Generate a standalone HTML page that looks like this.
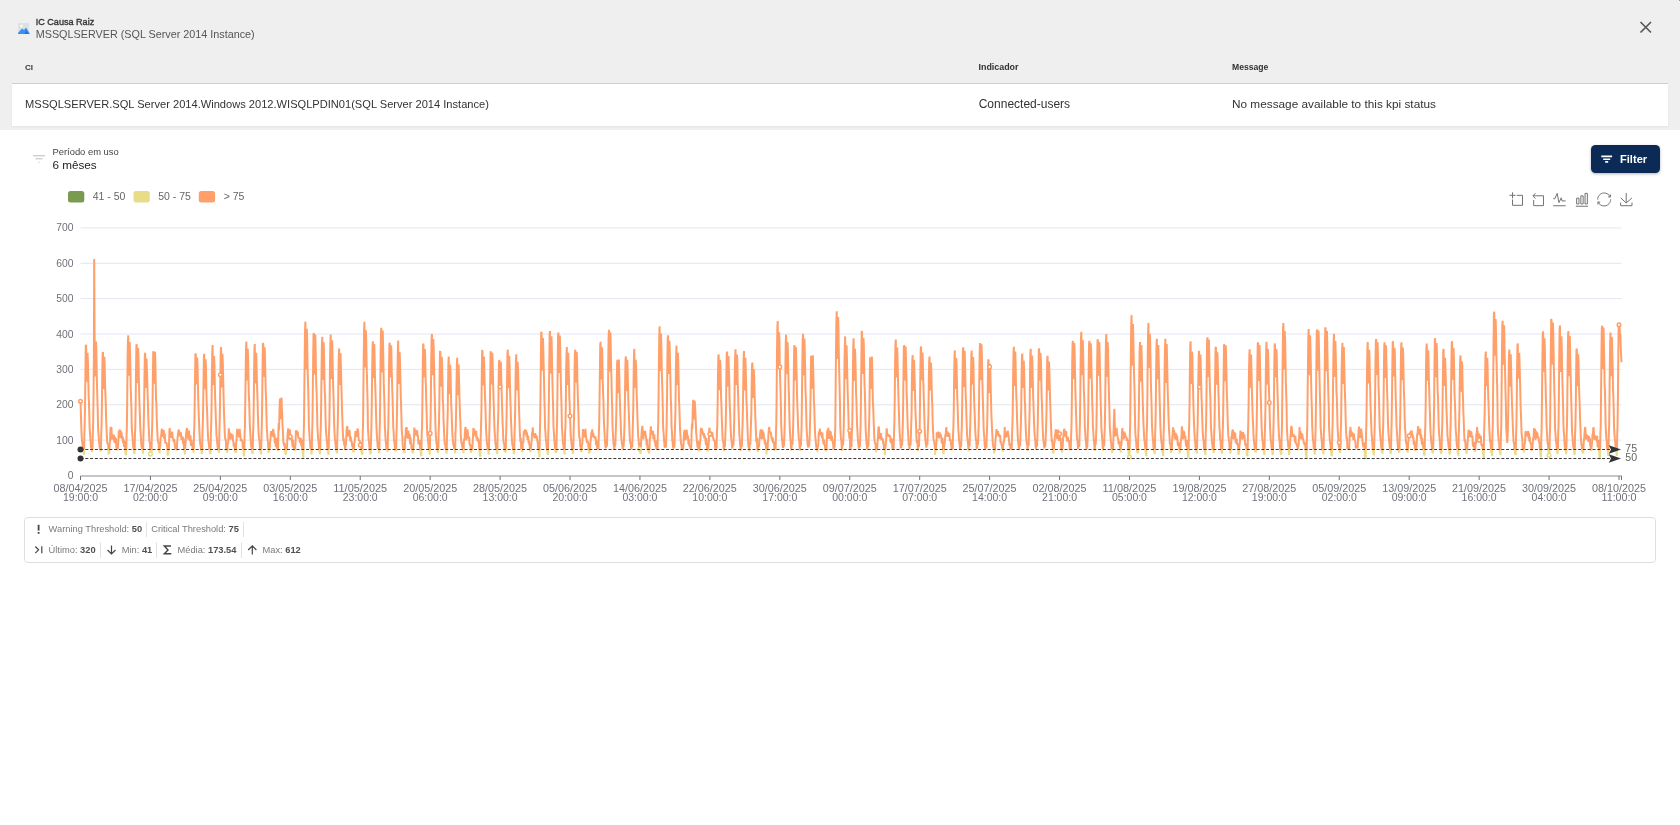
<!DOCTYPE html>
<html><head><meta charset="utf-8">
<style>
html,body{margin:0;padding:0;width:1680px;height:825px;overflow:hidden;background:#fff;font-family:"Liberation Sans",sans-serif;}
.abs{position:absolute;}
#hdr{left:0;top:0;width:1680px;height:130px;background:#efefef;}
#row{left:12px;top:83px;width:1656px;height:43px;background:#fff;border-top:1px solid #cfcfcf;box-sizing:border-box;box-shadow:0 1px 2px rgba(0,0,0,0.05);}
#btn{left:1590.8px;top:144.7px;width:69px;height:28.7px;background:#0b2a55;border-radius:4.5px;box-shadow:0 1px 3px rgba(0,0,0,0.3);}
#stats{left:23.8px;top:517.2px;width:1632.4px;height:45.4px;border:1px solid #dedede;border-radius:4px;box-sizing:border-box;}
svg{position:absolute;left:0;top:0;will-change:transform;}
text{font-family:"Liberation Sans",sans-serif;}
</style></head>
<body>
<div id="hdr" class="abs"></div>
<div id="row" class="abs"></div>
<div id="btn" class="abs"></div>
<div id="stats" class="abs"></div>
<svg width="1680" height="825" viewBox="0 0 1680 825">
<!-- header -->
<g>
  <rect x="18" y="23" width="11" height="11" fill="#dde1e6"/>
  <circle cx="21.5" cy="26" r="1.2" fill="#fff"/>
  <path d="M18,33 L22,28.5 L24,30 L26,27.5 L30,34 L18,34 Z" fill="#3c8ff0"/>
  <path d="M26.5,30 L28.5,34 L24.5,34 Z" fill="#1a73e8"/>
</g>
<text x="35.7" y="24.6" font-size="9.6" fill="#333" stroke="#333" stroke-width="0.35" textLength="58.5" lengthAdjust="spacingAndGlyphs">IC Causa Raiz</text>
<text x="35.7" y="37.9" font-size="10.8" fill="#555">MSSQLSERVER (SQL Server 2014 Instance)</text>
<path d="M1640.5,22 L1651,32.5 M1651,22 L1640.5,32.5" stroke="#555" stroke-width="1.6" fill="none"/>
<text x="25" y="70" font-size="8" font-weight="700" fill="#333">CI</text>
<text x="978.5" y="70" font-size="8.9" font-weight="700" fill="#333">Indicador</text>
<text x="1232" y="70" font-size="8.6" font-weight="700" fill="#333">Message</text>
<text x="25" y="108.4" font-size="11.1" fill="#333">MSSQLSERVER.SQL Server 2014.Windows 2012.WISQLPDIN01(SQL Server 2014 Instance)</text>
<text x="978.7" y="108.4" font-size="12" fill="#333">Connected-users</text>
<text x="1232" y="108.4" font-size="11.8" fill="#333">No message available to this kpi status</text>
<!-- filter area -->
<path d="M33,155.8 H45 M35.5,158.8 H42.5 M38.5,162.3 H39.5" stroke="#bbb" stroke-width="1" fill="none"/>
<text x="52.5" y="155.4" font-size="9.4" fill="#444">Período em uso</text>
<text x="52.5" y="168.9" font-size="11.7" fill="#222">6 mêses</text>
<path d="M1601.3,156.4 H1612.1 M1603.2,159.2 H1610.2 M1605.2,161.9 H1608.2" stroke="#fff" stroke-width="1.6" fill="none"/>
<text x="1620" y="162.9" font-size="11.1" font-weight="700" fill="#fff">Filter</text>
<!-- legend -->
<rect x="68" y="191" width="16.3" height="11.5" rx="2.5" fill="#7a9a50"/>
<rect x="133.5" y="191" width="16.3" height="11.5" rx="2.5" fill="#e8dc88"/>
<rect x="198.8" y="191" width="16.3" height="11.5" rx="2.5" fill="#ffa06a"/>
<text x="92.7" y="199.6" font-size="10.5" fill="#666">41 - 50</text>
<text x="158.2" y="199.6" font-size="10.5" fill="#666">50 - 75</text>
<text x="223.7" y="199.6" font-size="10.5" fill="#666">&gt; 75</text>
<!-- toolbox -->
<g fill="none" stroke="#727272" stroke-width="1">
 <g transform="translate(1509.5,192.3) scale(0.2241)"><path vector-effect="non-scaling-stroke" d="M0,13.5h26.9 M13.5,26.9V0 M32.1,13.5H58V58H13.5 V32.1"/></g>
 <g transform="translate(1530.7,192.9) scale(0.22)"><path vector-effect="non-scaling-stroke" d="M22,1.4L9.9,13.5l12.3,12.3 M10.3,13.1H58V58H13.5V32.1"/></g>
 <g transform="translate(1552.2,191.7) scale(0.2423)"><path vector-effect="non-scaling-stroke" d="M4.1,28.9h7.1l9.3-22l7.4,38l9.7-19.7l3,12.8h14.9M4.1,58h51.4"/></g>
 <g transform="translate(1575.1,192.9) scale(0.2300)"><path vector-effect="non-scaling-stroke" d="M6.7,22.9h10V48h-10V22.9zM24.9,13h10v35h-10V13zM43.2,2h10v46h-10V2zM3.1,58h53.7"/></g>
 <g transform="translate(1597.2,192.5) scale(0.2330)"><path vector-effect="non-scaling-stroke" d="M3.8,33.4 M47,18.9h9.8V8.7 M56.3,20.1 C52.1,9,40.5,0.6,26.8,2.1C12.6,3.7,1.6,16.2,2.1,30.6 M13,41.1H3.1v10.2 M3.7,39.8c3.9,11,15.5,19.4,29.2,17.9 c14.2-1.6,25.2-14.1,24.7-28.5"/></g>
 <g transform="translate(1619.6,192.7) scale(0.2260)"><path vector-effect="non-scaling-stroke" d="M4.7,22.9L29.3,45.5L54.7,23.4M4.6,43.6v14h50.2V43.6M29.3,45.5V1"/></g>
</g>
<line x1="80.5" y1="440.13" x2="1621.5" y2="440.13" stroke="#E0E6F1" stroke-width="1"/>
<line x1="80.5" y1="404.76" x2="1621.5" y2="404.76" stroke="#E0E6F1" stroke-width="1"/>
<line x1="80.5" y1="369.39" x2="1621.5" y2="369.39" stroke="#E0E6F1" stroke-width="1"/>
<line x1="80.5" y1="334.02" x2="1621.5" y2="334.02" stroke="#E0E6F1" stroke-width="1"/>
<line x1="80.5" y1="298.65" x2="1621.5" y2="298.65" stroke="#E0E6F1" stroke-width="1"/>
<line x1="80.5" y1="263.28" x2="1621.5" y2="263.28" stroke="#E0E6F1" stroke-width="1"/>
<line x1="80.5" y1="227.91" x2="1621.5" y2="227.91" stroke="#E0E6F1" stroke-width="1"/>
<text x="73.50" y="479.00" font-size="10.3" fill="#6E7079" text-anchor="end" font-weight="400" >0</text>
<text x="73.50" y="443.63" font-size="10.3" fill="#6E7079" text-anchor="end" font-weight="400" >100</text>
<text x="73.50" y="408.26" font-size="10.3" fill="#6E7079" text-anchor="end" font-weight="400" >200</text>
<text x="73.50" y="372.89" font-size="10.3" fill="#6E7079" text-anchor="end" font-weight="400" >300</text>
<text x="73.50" y="337.52" font-size="10.3" fill="#6E7079" text-anchor="end" font-weight="400" >400</text>
<text x="73.50" y="302.15" font-size="10.3" fill="#6E7079" text-anchor="end" font-weight="400" >500</text>
<text x="73.50" y="266.78" font-size="10.3" fill="#6E7079" text-anchor="end" font-weight="400" >600</text>
<text x="73.50" y="231.41" font-size="10.3" fill="#6E7079" text-anchor="end" font-weight="400" >700</text>
<defs><linearGradient id="lg" gradientUnits="userSpaceOnUse" x1="0" y1="475.50" x2="0" y2="227.91"><stop offset="0" stop-color="#91cc75"/></linearGradient></defs>
<defs><linearGradient id="vm" gradientUnits="userSpaceOnUse" x1="0" y1="475.50" x2="0" y2="227.91">
<stop offset="0.07143" stop-color="#7a9a50"/><stop offset="0.07143" stop-color="#e8dc88"/>
<stop offset="0.10714" stop-color="#e8dc88"/><stop offset="0.10714" stop-color="#ffa06a"/>
<stop offset="1" stop-color="#ffa06a"/></linearGradient></defs>
<polyline points="80.50,401.22 80.85,412.54 81.20,424.21 81.55,433.76 81.91,439.42 82.26,442.49 82.61,445.79 82.96,450.01 83.31,449.81 83.66,451.84 84.01,454.73 84.37,436.90 84.72,423.08 85.07,405.42 85.42,372.97 85.77,345.39 86.12,345.20 86.47,379.15 86.83,381.70 87.18,354.44 87.53,352.68 87.88,359.69 88.23,375.01 88.58,393.11 88.93,402.01 89.29,414.86 89.64,428.23 89.99,432.82 90.34,438.63 90.69,442.25 91.04,447.79 91.39,448.08 91.75,450.32 92.10,451.48 92.45,451.57 92.80,434.17 93.15,422.75 93.50,398.43 93.85,360.19 94.21,259.04 94.56,330.94 94.91,370.95 95.26,376.48 95.61,347.91 95.96,341.68 96.31,347.70 96.67,369.84 97.02,385.47 97.37,399.09 97.72,410.39 98.07,427.09 98.42,433.58 98.77,437.71 99.13,443.20 99.48,444.39 99.83,448.80 100.18,448.54 100.53,450.95 100.88,451.13 101.23,434.33 101.58,425.70 101.94,405.25 102.29,373.74 102.64,353.24 102.99,351.92 103.34,385.36 103.69,388.92 104.04,359.91 104.40,356.82 104.75,368.70 105.10,386.27 105.45,395.45 105.80,404.34 106.15,420.34 106.50,427.66 106.86,436.43 107.21,442.27 107.56,443.79 107.91,443.32 108.26,445.19 108.61,454.58 108.96,450.04 109.32,453.51 109.67,443.43 110.02,441.68 110.37,431.32 110.72,426.87 111.07,430.18 111.42,427.06 111.78,435.51 112.13,439.78 112.48,434.26 112.83,438.07 113.18,435.84 113.53,435.32 113.88,434.87 114.24,440.46 114.59,442.92 114.94,436.75 115.29,443.26 115.64,438.74 115.99,438.25 116.34,446.91 116.70,448.98 117.05,450.20 117.40,449.77 117.75,448.45 118.10,444.89 118.45,439.03 118.80,430.77 119.16,431.22 119.51,430.86 119.86,429.62 120.21,436.18 120.56,437.71 120.91,430.78 121.26,433.57 121.62,432.61 121.97,438.96 122.32,436.67 122.67,436.57 123.02,443.13 123.37,439.07 123.72,440.33 124.08,447.01 124.43,441.09 124.78,446.10 125.13,448.81 125.48,453.61 125.83,454.36 126.18,454.94 126.54,436.86 126.89,426.10 127.24,397.02 127.59,359.89 127.94,341.05 128.29,335.39 128.64,373.74 129.00,375.67 129.35,347.28 129.70,342.02 130.05,352.86 130.40,369.51 130.75,388.45 131.10,399.14 131.46,409.94 131.81,428.36 132.16,432.81 132.51,437.18 132.86,442.22 133.21,447.05 133.56,448.32 133.92,451.23 134.27,453.55 134.62,453.29 134.97,434.23 135.32,425.94 135.67,404.39 136.02,371.41 136.38,345.51 136.73,344.36 137.08,378.25 137.43,383.10 137.78,355.60 138.13,348.12 138.48,356.99 138.84,377.16 139.19,394.55 139.54,405.81 139.89,414.87 140.24,427.78 140.59,432.31 140.94,437.46 141.29,444.52 141.65,446.83 142.00,448.31 142.35,449.66 142.70,451.14 143.05,453.64 143.40,436.44 143.75,425.20 144.11,405.53 144.46,378.37 144.81,356.85 145.16,352.65 145.51,387.19 145.86,387.26 146.21,358.96 146.57,359.43 146.92,370.38 147.27,379.78 147.62,395.04 147.97,404.16 148.32,418.95 148.67,427.00 149.03,434.49 149.38,441.92 149.73,441.89 150.08,444.66 150.43,453.92 150.78,450.14 151.13,453.15 151.49,453.66 151.84,436.06 152.19,426.07 152.54,405.62 152.89,376.27 153.24,351.17 153.59,352.80 153.95,381.98 154.30,383.47 154.65,356.66 155.00,351.81 155.35,361.87 155.70,380.52 156.05,399.62 156.41,404.51 156.76,418.74 157.11,428.36 157.46,434.63 157.81,440.15 158.16,442.69 158.51,441.75 158.87,447.59 159.22,451.85 159.57,453.37 159.92,446.00 160.27,445.65 160.62,437.53 160.97,436.19 161.33,434.07 161.68,429.91 162.03,428.73 162.38,436.79 162.73,433.20 163.08,431.30 163.43,430.95 163.79,430.08 164.14,439.00 164.49,434.70 164.84,433.97 165.19,442.85 165.54,442.23 165.89,443.67 166.25,442.71 166.60,442.61 166.95,446.04 167.30,446.08 167.65,454.97 168.00,455.19 168.35,452.76 168.71,448.89 169.06,444.10 169.41,430.46 169.76,428.03 170.11,434.03 170.46,431.62 170.81,435.46 171.17,437.59 171.52,436.55 171.87,432.41 172.22,432.26 172.57,435.75 172.92,438.73 173.27,438.88 173.63,442.18 173.98,439.62 174.33,439.56 174.68,444.06 175.03,445.76 175.38,448.75 175.73,449.78 176.09,449.43 176.44,448.50 176.79,450.43 177.14,442.67 177.49,439.00 177.84,435.45 178.19,432.46 178.55,430.26 178.90,429.78 179.25,434.49 179.60,434.10 179.95,435.54 180.30,436.11 180.65,432.73 181.01,432.68 181.36,439.83 181.71,437.99 182.06,439.40 182.41,436.64 182.76,437.53 183.11,444.12 183.46,438.24 183.82,443.11 184.17,450.81 184.52,450.72 184.87,454.56 185.22,446.45 185.57,443.94 185.92,436.57 186.28,432.13 186.63,429.75 186.98,428.08 187.33,431.05 187.68,437.41 188.03,435.08 188.38,439.73 188.74,437.04 189.09,430.53 189.44,438.66 189.79,439.64 190.14,440.99 190.49,435.22 190.84,443.08 191.20,445.93 191.55,439.82 191.90,444.56 192.25,444.63 192.60,448.83 192.95,448.90 193.30,450.57 193.66,452.73 194.01,433.84 194.36,426.19 194.71,405.33 195.06,376.10 195.41,353.55 195.76,354.13 196.12,384.35 196.47,383.04 196.82,364.39 197.17,357.56 197.52,365.80 197.87,380.07 198.22,399.11 198.58,409.48 198.93,419.28 199.28,427.91 199.63,434.88 199.98,441.11 200.33,444.79 200.68,446.37 201.04,450.09 201.39,450.53 201.74,453.95 202.09,453.04 202.44,433.16 202.79,424.73 203.14,407.80 203.50,381.98 203.85,357.84 204.20,353.78 204.55,387.94 204.90,389.05 205.25,365.30 205.60,359.38 205.96,367.17 206.31,388.05 206.66,402.82 207.01,407.80 207.36,418.87 207.71,429.88 208.06,437.33 208.42,441.15 208.77,443.32 209.12,446.87 209.47,450.67 209.82,449.88 210.17,453.05 210.52,454.08 210.88,434.26 211.23,422.63 211.58,406.52 211.93,371.62 212.28,351.92 212.63,344.96 212.98,382.71 213.34,384.96 213.69,359.70 214.04,355.96 214.39,362.97 214.74,380.30 215.09,397.15 215.44,406.07 215.80,417.23 216.15,425.88 216.50,435.79 216.85,437.91 217.20,443.02 217.55,445.58 217.90,449.63 218.26,448.91 218.61,451.08 218.96,452.82 219.31,435.07 219.66,423.53 220.01,404.11 220.36,374.70 220.72,352.39 221.07,347.03 221.42,385.58 221.77,387.26 222.12,362.18 222.47,353.76 222.82,364.07 223.17,378.35 223.53,394.11 223.88,408.46 224.23,419.00 224.58,428.77 224.93,436.54 225.28,439.72 225.63,438.60 225.99,442.11 226.34,450.87 226.69,447.03 227.04,452.81 227.39,450.03 227.74,443.33 228.09,443.94 228.45,438.57 228.80,428.22 229.15,432.14 229.50,432.96 229.85,433.02 230.20,434.27 230.55,439.71 230.91,435.28 231.26,433.64 231.61,434.60 231.96,438.55 232.31,436.52 232.66,434.53 233.01,441.13 233.37,441.14 233.72,446.46 234.07,443.97 234.42,444.27 234.77,452.18 235.12,446.83 235.47,447.34 235.83,453.03 236.18,441.38 236.53,441.29 236.88,432.32 237.23,428.92 237.58,432.11 237.93,430.02 238.29,432.35 238.64,433.07 238.99,437.33 239.34,431.43 239.69,428.81 240.04,432.88 240.39,435.55 240.75,440.86 241.10,438.77 241.45,441.49 241.80,439.54 242.15,441.32 242.50,441.31 242.85,447.20 243.21,448.94 243.56,452.53 243.91,456.41 244.26,454.35 244.61,434.40 244.96,425.86 245.31,399.69 245.67,372.21 246.02,348.38 246.37,341.66 246.72,379.57 247.07,379.87 247.42,352.76 247.77,348.81 248.13,360.42 248.48,378.58 248.83,395.21 249.18,401.22 249.53,413.75 249.88,426.54 250.23,432.32 250.59,438.96 250.94,442.67 251.29,446.42 251.64,448.05 251.99,451.99 252.34,452.31 252.69,454.02 253.05,433.96 253.40,424.96 253.75,405.48 254.10,372.62 254.45,349.64 254.80,344.12 255.15,383.33 255.51,379.84 255.86,359.15 256.21,352.85 256.56,364.41 256.91,381.15 257.26,391.97 257.61,402.69 257.97,417.07 258.32,427.79 258.67,434.37 259.02,438.39 259.37,440.43 259.72,445.00 260.07,449.15 260.43,451.59 260.78,452.73 261.13,454.23 261.48,434.89 261.83,424.12 262.18,403.68 262.53,369.74 262.88,343.13 263.24,344.42 263.59,376.58 263.94,375.96 264.29,348.67 264.64,347.30 264.99,356.85 265.34,374.11 265.70,389.88 266.05,398.20 266.40,413.01 266.75,427.40 267.10,431.78 267.45,438.06 267.80,440.97 268.16,443.70 268.51,453.20 268.86,447.90 269.21,449.61 269.56,449.40 269.91,445.22 270.26,440.49 270.62,437.64 270.97,431.02 271.32,434.48 271.67,431.64 272.02,432.42 272.37,436.40 272.72,434.57 273.08,429.54 273.43,429.45 273.78,437.82 274.13,433.20 274.48,436.17 274.83,442.85 275.18,441.42 275.54,444.00 275.89,446.84 276.24,437.95 276.59,442.38 276.94,448.75 277.29,447.40 277.64,449.11 278.00,450.69 278.35,433.81 278.70,422.98 279.05,430.11 279.40,414.88 279.75,401.63 280.10,398.67 280.46,417.05 280.81,419.01 281.16,403.99 281.51,397.62 281.86,408.04 282.21,414.52 282.56,426.50 282.92,431.24 283.27,440.81 283.62,443.41 283.97,444.35 284.32,445.99 284.67,442.78 285.02,448.84 285.38,452.96 285.73,453.97 286.08,454.15 286.43,449.42 286.78,449.48 287.13,444.52 287.48,435.30 287.84,432.14 288.19,428.36 288.54,435.77 288.89,434.65 289.24,436.84 289.59,439.53 289.94,429.48 290.30,436.59 290.65,438.20 291.00,436.12 291.35,440.38 291.70,437.59 292.05,441.54 292.40,445.00 292.76,447.08 293.11,439.80 293.46,447.86 293.81,445.97 294.16,450.71 294.51,447.11 294.86,451.16 295.22,447.73 295.57,442.28 295.92,431.93 296.27,430.10 296.62,431.65 296.97,435.38 297.32,432.09 297.68,431.57 298.03,434.33 298.38,438.33 298.73,437.38 299.08,438.24 299.43,438.92 299.78,441.56 300.14,442.82 300.49,438.71 300.84,437.86 301.19,445.71 301.54,439.87 301.89,446.06 302.24,448.32 302.60,451.42 302.95,453.45 303.30,457.68 303.65,435.76 304.00,423.97 304.35,389.08 304.70,357.31 305.05,330.12 305.41,321.64 305.76,369.23 306.11,367.28 306.46,337.40 306.81,328.90 307.16,339.25 307.51,364.26 307.87,378.43 308.22,390.58 308.57,404.68 308.92,426.50 309.27,431.56 309.62,438.49 309.97,441.85 310.33,447.02 310.68,448.42 311.03,450.29 311.38,453.23 311.73,454.32 312.08,434.14 312.43,423.98 312.79,394.25 313.14,360.29 313.49,334.92 313.84,332.93 314.19,369.60 314.54,374.46 314.89,342.32 315.25,334.46 315.60,346.63 315.95,369.59 316.30,386.00 316.65,393.31 317.00,408.29 317.35,425.35 317.71,431.74 318.06,438.18 318.41,440.14 318.76,445.06 319.11,450.15 319.46,450.72 319.81,454.00 320.17,453.43 320.52,433.23 320.87,425.93 321.22,399.34 321.57,368.19 321.92,345.00 322.27,336.86 322.63,378.27 322.98,379.63 323.33,351.37 323.68,342.39 324.03,353.82 324.38,375.76 324.73,390.73 325.09,396.52 325.44,413.20 325.79,426.47 326.14,433.34 326.49,437.01 326.84,441.18 327.19,444.84 327.55,449.37 327.90,451.42 328.25,453.59 328.60,454.68 328.95,433.73 329.30,425.90 329.65,402.80 330.01,361.56 330.36,343.48 330.71,334.42 331.06,378.86 331.41,376.17 331.76,350.23 332.11,340.40 332.47,352.98 332.82,370.77 333.17,386.52 333.52,396.81 333.87,412.43 334.22,426.32 334.57,433.25 334.93,439.38 335.28,441.39 335.63,445.60 335.98,448.28 336.33,451.35 336.68,452.18 337.03,453.18 337.39,434.11 337.74,426.04 338.09,406.94 338.44,374.31 338.79,355.71 339.14,348.50 339.49,382.67 339.85,384.88 340.20,357.96 340.55,353.19 340.90,366.09 341.25,381.59 341.60,392.22 341.95,407.02 342.31,417.50 342.66,428.85 343.01,435.98 343.36,441.23 343.71,437.94 344.06,443.71 344.41,445.17 344.76,445.91 345.12,450.06 345.47,445.36 345.82,445.11 346.17,440.88 346.52,430.70 346.87,427.58 347.22,426.09 347.58,431.79 347.93,431.25 348.28,436.74 348.63,430.60 348.98,429.90 349.33,434.97 349.68,430.48 350.04,438.79 350.39,441.02 350.74,436.67 351.09,442.02 351.44,441.37 351.79,441.68 352.14,446.12 352.50,443.53 352.85,450.68 353.20,451.01 353.55,452.52 353.90,447.10 354.25,443.17 354.60,442.09 354.96,438.47 355.31,433.13 355.66,431.04 356.01,435.53 356.36,436.95 356.71,433.47 357.06,433.34 357.42,429.38 357.77,428.65 358.12,431.01 358.47,437.06 358.82,440.41 359.17,440.44 359.52,440.47 359.88,441.31 360.23,445.08 360.58,442.04 360.93,444.59 361.28,450.34 361.63,453.18 361.98,453.66 362.34,454.67 362.69,435.79 363.04,425.39 363.39,388.90 363.74,356.16 364.09,329.21 364.44,321.78 364.80,364.72 365.15,367.34 365.50,337.46 365.85,330.23 366.20,338.50 366.55,360.61 366.90,375.40 367.26,389.05 367.61,403.19 367.96,428.33 368.31,434.17 368.66,439.73 369.01,441.78 369.36,446.60 369.72,451.25 370.07,450.03 370.42,453.91 370.77,453.77 371.12,435.98 371.47,423.21 371.82,401.96 372.18,369.39 372.53,348.01 372.88,341.24 373.23,377.57 373.58,377.23 373.93,348.60 374.28,343.95 374.64,358.70 374.99,377.01 375.34,388.77 375.69,399.33 376.04,413.48 376.39,425.52 376.74,432.87 377.10,438.79 377.45,442.72 377.80,447.85 378.15,448.95 378.50,448.67 378.85,450.75 379.20,453.17 379.56,434.36 379.91,422.72 380.26,392.16 380.61,356.78 380.96,333.04 381.31,327.88 381.66,371.63 382.02,371.55 382.37,338.51 382.72,330.43 383.07,345.37 383.42,365.53 383.77,383.63 384.12,394.70 384.47,406.58 384.83,426.86 385.18,431.43 385.53,439.23 385.88,442.20 386.23,445.88 386.58,449.85 386.93,448.84 387.29,451.06 387.64,451.36 387.99,434.56 388.34,426.22 388.69,401.05 389.04,367.62 389.39,345.21 389.75,342.65 390.10,377.25 390.45,375.82 390.80,354.66 391.15,345.28 391.50,358.13 391.85,374.59 392.21,388.03 392.56,398.32 392.91,413.17 393.26,427.77 393.61,431.57 393.96,439.14 394.31,441.96 394.67,444.69 395.02,450.22 395.37,451.10 395.72,450.58 396.07,451.31 396.42,435.71 396.77,424.81 397.13,404.68 397.48,372.85 397.83,349.64 398.18,340.53 398.53,383.74 398.88,382.68 399.23,356.57 399.59,352.16 399.94,359.53 400.29,375.10 400.64,390.21 400.99,402.21 401.34,413.85 401.69,428.44 402.05,434.17 402.40,437.03 402.75,445.86 403.10,447.93 403.45,448.78 403.80,452.52 404.15,450.67 404.51,453.49 404.86,447.86 405.21,435.92 405.56,438.10 405.91,427.56 406.26,433.19 406.61,427.11 406.97,432.16 407.32,434.53 407.67,438.47 408.02,437.86 408.37,430.67 408.72,437.45 409.07,438.74 409.43,434.33 409.78,435.27 410.13,444.28 410.48,437.31 410.83,442.64 411.18,442.98 411.53,449.40 411.89,449.63 412.24,445.90 412.59,453.11 412.94,452.72 413.29,448.70 413.64,443.56 413.99,436.18 414.35,427.47 414.70,434.12 415.05,434.47 415.40,429.72 415.75,431.32 416.10,430.76 416.45,436.10 416.81,434.40 417.16,430.32 417.51,436.02 417.86,435.43 418.21,440.43 418.56,444.53 418.91,442.97 419.27,440.68 419.62,440.55 419.97,445.70 420.32,449.64 420.67,452.89 421.02,455.39 421.37,455.74 421.73,433.71 422.08,425.56 422.43,401.49 422.78,365.76 423.13,343.69 423.48,344.42 423.83,376.21 424.19,377.09 424.54,355.17 424.89,349.14 425.24,360.26 425.59,378.65 425.94,388.11 426.29,402.80 426.64,412.84 427.00,428.05 427.35,434.78 427.70,436.86 428.05,440.50 428.40,444.05 428.75,448.78 429.10,450.11 429.46,451.30 429.81,454.63 430.16,433.41 430.51,424.62 430.86,400.19 431.21,361.61 431.56,339.52 431.92,333.97 432.27,374.53 432.62,374.92 432.97,346.34 433.32,338.96 433.67,347.60 434.02,366.30 434.38,383.81 434.73,395.31 435.08,411.17 435.43,425.00 435.78,433.87 436.13,439.34 436.48,443.22 436.84,445.06 437.19,450.12 437.54,449.65 437.89,453.18 438.24,451.22 438.59,435.18 438.94,424.48 439.30,407.00 439.65,373.53 440.00,351.63 440.35,351.15 440.70,386.53 441.05,385.28 441.40,364.33 441.76,356.84 442.11,363.79 442.46,380.43 442.81,400.40 443.16,404.71 443.51,418.80 443.86,426.62 444.22,436.24 444.57,441.75 444.92,445.07 445.27,444.47 445.62,449.77 445.97,448.78 446.32,451.51 446.68,453.58 447.03,435.78 447.38,424.37 447.73,412.21 448.08,383.31 448.43,361.55 448.78,356.48 449.14,391.12 449.49,394.22 449.84,370.42 450.19,364.70 450.54,372.29 450.89,390.77 451.24,405.15 451.60,412.77 451.95,422.74 452.30,432.94 452.65,438.13 453.00,441.43 453.35,445.49 453.70,445.04 454.06,448.23 454.41,448.90 454.76,450.73 455.11,453.27 455.46,434.29 455.81,425.87 456.16,409.59 456.52,384.40 456.87,364.17 457.22,357.79 457.57,394.24 457.92,394.93 458.27,367.45 458.62,364.45 458.98,377.28 459.33,392.62 459.68,404.13 460.03,415.76 460.38,421.45 460.73,432.94 461.08,439.51 461.44,443.71 461.79,441.79 462.14,446.41 462.49,447.44 462.84,448.92 463.19,451.68 463.54,453.03 463.90,441.03 464.25,438.37 464.60,438.65 464.95,431.82 465.30,427.89 465.65,427.12 466.00,437.75 466.35,440.40 466.71,435.36 467.06,434.48 467.41,429.43 467.76,431.47 468.11,437.43 468.46,438.05 468.81,437.95 469.17,436.60 469.52,444.29 469.87,443.95 470.22,445.68 470.57,444.49 470.92,452.97 471.27,446.39 471.63,450.88 471.98,448.65 472.33,449.25 472.68,442.59 473.03,435.11 473.38,428.00 473.73,429.87 474.09,433.62 474.44,429.33 474.79,434.40 475.14,434.92 475.49,436.50 475.84,434.91 476.19,430.79 476.55,439.26 476.90,437.01 477.25,437.61 477.60,441.46 477.95,439.07 478.30,439.19 478.65,441.40 479.01,445.04 479.36,450.66 479.71,454.75 480.06,455.42 480.41,456.60 480.76,436.19 481.11,422.95 481.47,408.06 481.82,372.20 482.17,349.92 482.52,351.92 482.87,381.66 483.22,385.31 483.57,361.37 483.93,356.50 484.28,367.65 484.63,380.81 484.98,396.77 485.33,403.56 485.68,416.24 486.03,429.08 486.39,435.44 486.74,440.54 487.09,443.90 487.44,446.94 487.79,450.42 488.14,449.46 488.49,452.95 488.85,454.55 489.20,436.09 489.55,424.62 489.90,405.79 490.25,376.57 490.60,351.95 490.95,351.60 491.31,383.63 491.66,384.07 492.01,361.95 492.36,352.84 492.71,365.44 493.06,380.78 493.41,395.48 493.77,405.34 494.12,417.78 494.47,429.22 494.82,434.19 495.17,438.97 495.52,444.91 495.87,445.66 496.23,450.40 496.58,448.66 496.93,451.61 497.28,454.12 497.63,433.77 497.98,422.50 498.33,411.81 498.69,377.77 499.04,361.37 499.39,359.99 499.74,389.16 500.09,386.72 500.44,365.50 500.79,361.84 501.15,374.63 501.50,386.96 501.85,398.82 502.20,410.88 502.55,421.18 502.90,429.46 503.25,438.00 503.61,442.55 503.96,443.11 504.31,444.71 504.66,450.66 505.01,451.79 505.36,451.32 505.71,452.84 506.06,435.77 506.42,422.86 506.77,404.89 507.12,376.45 507.47,352.31 507.82,349.68 508.17,384.87 508.52,388.10 508.88,365.39 509.23,355.73 509.58,365.21 509.93,383.98 510.28,397.88 510.63,407.13 510.98,419.60 511.34,427.89 511.69,435.78 512.04,441.34 512.39,445.34 512.74,445.76 513.09,450.20 513.44,449.34 513.80,453.61 514.15,453.45 514.50,436.18 514.85,424.75 515.20,408.23 515.55,381.23 515.90,360.97 516.26,354.31 516.61,390.26 516.96,388.11 517.31,366.24 517.66,361.86 518.01,368.47 518.36,381.52 518.72,396.46 519.07,408.66 519.42,420.06 519.77,430.93 520.12,437.47 520.47,442.19 520.82,437.84 521.18,449.31 521.53,444.50 521.88,450.60 522.23,451.70 522.58,451.51 522.93,441.18 523.28,443.02 523.64,434.17 523.99,431.19 524.34,432.99 524.69,434.19 525.04,429.30 525.39,433.21 525.74,433.03 526.10,430.06 526.45,436.75 526.80,432.60 527.15,433.58 527.50,439.83 527.85,439.11 528.20,435.77 528.56,443.14 528.91,440.55 529.26,444.98 529.61,444.25 529.96,450.74 530.31,450.31 530.66,452.27 531.02,445.92 531.37,443.18 531.72,440.09 532.07,433.10 532.42,431.95 532.77,427.43 533.12,433.87 533.48,433.36 533.83,435.10 534.18,436.21 534.53,437.93 534.88,436.09 535.23,433.18 535.58,438.54 535.94,434.93 536.29,438.67 536.64,435.96 536.99,438.35 537.34,440.87 537.69,442.00 538.04,447.74 538.40,449.28 538.75,452.08 539.10,453.52 539.45,457.03 539.80,436.33 540.15,422.52 540.50,393.66 540.86,359.03 541.21,332.46 541.56,332.26 541.91,370.27 542.26,369.39 542.61,340.70 542.96,338.00 543.32,349.83 543.67,365.32 544.02,380.97 544.37,397.91 544.72,410.21 545.07,428.17 545.42,432.05 545.78,438.39 546.13,441.70 546.48,444.04 546.83,449.07 547.18,451.13 547.53,451.55 547.88,454.98 548.23,435.85 548.59,423.62 548.94,397.68 549.29,362.23 549.64,334.02 549.99,330.99 550.34,367.25 550.69,373.40 551.05,339.30 551.40,336.39 551.75,345.10 552.10,366.60 552.45,382.51 552.80,396.58 553.15,409.44 553.51,426.86 553.86,431.99 554.21,438.55 554.56,442.50 554.91,446.29 555.26,451.08 555.61,450.93 555.97,452.05 556.32,452.86 556.67,434.62 557.02,425.21 557.37,399.10 557.72,362.84 558.07,335.97 558.43,332.63 558.78,370.60 559.13,372.75 559.48,340.23 559.83,335.57 560.18,346.74 560.53,365.07 560.89,383.99 561.24,396.26 561.59,409.47 561.94,428.24 562.29,432.01 562.64,438.01 562.99,443.53 563.35,444.31 563.70,449.18 564.05,449.73 564.40,452.57 564.75,454.49 565.10,433.06 565.45,425.68 565.81,405.83 566.16,369.25 566.51,353.63 566.86,347.11 567.21,383.20 567.56,384.84 567.91,354.37 568.27,352.85 568.62,365.97 568.97,379.39 569.32,398.12 569.67,403.41 570.02,416.08 570.37,425.28 570.73,436.01 571.08,438.93 571.43,442.72 571.78,446.07 572.13,450.28 572.48,450.97 572.83,453.76 573.19,452.55 573.54,436.60 573.89,422.58 574.24,407.92 574.59,369.22 574.94,352.80 575.29,349.70 575.65,381.07 576.00,382.58 576.35,355.15 576.70,351.84 577.05,361.28 577.40,381.89 577.75,393.16 578.11,404.60 578.46,414.64 578.81,428.44 579.16,435.83 579.51,438.83 579.86,437.98 580.21,446.51 580.57,446.68 580.92,449.83 581.27,452.10 581.62,449.64 581.97,444.50 582.32,444.46 582.67,436.61 583.03,429.10 583.38,432.45 583.73,431.89 584.08,436.00 584.43,437.20 584.78,433.79 585.13,431.52 585.49,428.85 585.84,434.68 586.19,438.62 586.54,438.80 586.89,442.78 587.24,442.53 587.59,440.77 587.94,441.94 588.30,444.28 588.65,448.72 589.00,452.32 589.35,453.34 589.70,451.08 590.05,451.58 590.40,441.91 590.76,439.53 591.11,436.29 591.46,431.92 591.81,434.46 592.16,429.50 592.51,431.45 592.86,437.14 593.22,433.10 593.57,435.86 593.92,435.64 594.27,436.97 594.62,438.67 594.97,436.33 595.32,437.41 595.68,438.04 596.03,445.19 596.38,440.51 596.73,441.62 597.08,446.44 597.43,449.49 597.78,446.23 598.14,449.26 598.49,449.20 598.84,434.43 599.19,423.55 599.54,400.20 599.89,372.40 600.24,345.10 600.60,341.80 600.95,379.26 601.30,377.37 601.65,357.01 602.00,347.23 602.35,356.89 602.70,379.49 603.06,391.94 603.41,399.97 603.76,415.71 604.11,425.43 604.46,431.96 604.81,438.89 605.16,442.80 605.52,447.07 605.87,448.22 606.22,443.44 606.57,445.98 606.92,446.19 607.27,433.34 607.62,425.35 607.98,398.37 608.33,355.18 608.68,334.76 609.03,329.88 609.38,366.70 609.73,371.61 610.08,343.71 610.44,332.18 610.79,348.45 611.14,367.65 611.49,380.15 611.84,396.88 612.19,406.72 612.54,427.28 612.90,433.75 613.25,439.01 613.60,444.73 613.95,445.73 614.30,449.90 614.65,443.11 615.00,446.04 615.36,444.65 615.71,433.31 616.06,423.41 616.41,408.46 616.76,384.31 617.11,363.02 617.46,359.81 617.82,393.14 618.17,387.38 618.52,364.27 618.87,359.50 619.22,371.44 619.57,389.88 619.92,401.81 620.28,413.86 620.63,419.89 620.98,431.57 621.33,438.56 621.68,440.94 622.03,444.92 622.38,444.32 622.74,450.24 623.09,442.50 623.44,446.79 623.79,444.42 624.14,435.40 624.49,424.99 624.84,407.49 625.20,377.50 625.55,359.24 625.90,356.49 626.25,387.36 626.60,391.26 626.95,360.93 627.30,359.80 627.65,370.77 628.01,385.46 628.36,401.58 628.71,409.88 629.06,419.38 629.41,429.59 629.76,437.15 630.11,442.17 630.47,443.27 630.82,444.88 631.17,449.75 631.52,442.09 631.87,445.33 632.22,447.44 632.57,436.28 632.93,423.04 633.28,407.36 633.63,377.01 633.98,354.97 634.33,348.90 634.68,386.99 635.03,387.09 635.39,362.23 635.74,359.78 636.09,365.93 636.44,382.54 636.79,397.32 637.14,407.56 637.49,418.49 637.85,427.56 638.20,436.88 638.55,439.04 638.90,445.44 639.25,442.42 639.60,451.61 639.95,448.97 640.31,453.30 640.66,453.20 641.01,445.06 641.36,437.01 641.71,431.65 642.06,427.82 642.41,425.81 642.77,435.75 643.12,434.88 643.47,439.50 643.82,432.83 644.17,434.21 644.52,430.81 644.87,431.75 645.23,431.30 645.58,435.67 645.93,435.26 646.28,439.68 646.63,445.40 646.98,439.36 647.33,445.66 647.69,449.60 648.04,445.58 648.39,452.41 648.74,449.60 649.09,453.66 649.44,448.10 649.79,438.15 650.15,439.08 650.50,431.19 650.85,426.20 651.20,434.27 651.55,431.88 651.90,433.64 652.25,434.07 652.61,431.31 652.96,431.23 653.31,438.94 653.66,438.72 654.01,436.97 654.36,434.39 654.71,442.73 655.07,440.75 655.42,446.38 655.77,440.32 656.12,446.18 656.47,449.42 656.82,445.31 657.17,449.50 657.53,447.91 657.88,433.83 658.23,422.99 658.58,396.51 658.93,360.23 659.28,335.83 659.63,326.24 659.99,370.51 660.34,370.85 660.69,340.64 661.04,333.52 661.39,347.93 661.74,366.83 662.09,381.36 662.45,393.01 662.80,408.86 663.15,428.20 663.50,431.54 663.85,437.20 664.20,441.21 664.55,446.34 664.91,447.72 665.26,443.41 665.61,446.36 665.96,447.52 666.31,435.58 666.66,424.00 667.01,399.23 667.37,360.00 667.72,338.23 668.07,335.38 668.42,373.26 668.77,373.68 669.12,345.48 669.47,340.73 669.82,351.77 670.18,370.25 670.53,384.69 670.88,400.45 671.23,409.90 671.58,427.40 671.93,431.82 672.28,439.52 672.64,442.63 672.99,446.19 673.34,448.68 673.69,444.29 674.04,446.18 674.39,447.39 674.74,434.76 675.10,424.09 675.45,409.39 675.80,376.48 676.15,354.80 676.50,345.64 676.85,384.65 677.20,383.87 677.56,360.49 677.91,352.81 678.26,361.86 678.61,379.32 678.96,399.25 679.31,406.28 679.66,417.29 680.02,428.99 680.37,433.95 680.72,440.69 681.07,443.80 681.42,444.64 681.77,447.84 682.12,450.42 682.48,447.79 682.83,449.15 683.18,446.88 683.53,444.14 683.88,434.34 684.23,432.54 684.58,429.89 684.94,433.04 685.29,438.30 685.64,440.14 685.99,438.32 686.34,437.50 686.69,429.82 687.04,433.73 687.40,438.29 687.75,435.36 688.10,437.48 688.45,444.16 688.80,439.23 689.15,445.45 689.50,445.19 689.86,446.80 690.21,445.69 690.56,448.49 690.91,449.24 691.26,445.46 691.61,433.67 691.96,423.62 692.32,428.95 692.67,414.06 693.02,401.60 693.37,399.84 693.72,419.70 694.07,417.13 694.42,400.82 694.78,401.78 695.13,406.90 695.48,413.93 695.83,423.00 696.18,433.33 696.53,435.82 696.88,441.46 697.24,444.04 697.59,447.56 697.94,440.53 698.29,445.92 698.64,451.42 698.99,449.74 699.34,451.33 699.70,445.08 700.05,441.90 700.40,439.33 700.75,431.41 701.10,427.76 701.45,433.31 701.80,428.63 702.16,430.70 702.51,431.37 702.86,432.79 703.21,434.76 703.56,435.76 703.91,433.07 704.26,438.55 704.62,434.93 704.97,438.03 705.32,437.13 705.67,442.86 706.02,444.77 706.37,438.18 706.72,444.29 707.08,449.74 707.43,449.83 707.78,451.69 708.13,448.01 708.48,445.28 708.83,442.10 709.18,430.41 709.53,427.74 709.89,434.12 710.24,433.68 710.59,436.58 710.94,433.76 711.29,432.21 711.64,432.36 711.99,435.69 712.35,432.44 712.70,435.67 713.05,438.47 713.40,437.90 713.75,440.60 714.10,440.18 714.45,440.65 714.81,441.97 715.16,447.48 715.51,449.23 715.86,444.23 716.21,447.48 716.56,448.49 716.91,433.63 717.27,426.21 717.62,406.12 717.97,376.72 718.32,356.20 718.67,354.46 719.02,386.54 719.37,390.04 719.73,362.73 720.08,359.73 720.43,364.75 720.78,381.56 721.13,398.59 721.48,406.39 721.83,419.61 722.19,428.91 722.54,437.54 722.89,439.97 723.24,442.01 723.59,444.95 723.94,451.12 724.29,441.89 724.65,447.16 725.00,445.71 725.35,435.05 725.70,426.11 726.05,407.19 726.40,372.59 726.75,353.17 727.11,351.60 727.46,383.13 727.81,386.37 728.16,357.50 728.51,356.00 728.86,368.30 729.21,378.26 729.57,399.65 729.92,408.38 730.27,416.94 730.62,429.28 730.97,435.28 731.32,439.17 731.67,441.80 732.03,446.56 732.38,448.50 732.73,441.87 733.08,444.95 733.43,445.47 733.78,435.69 734.13,424.75 734.49,401.40 734.84,369.45 735.19,354.48 735.54,349.26 735.89,385.00 736.24,380.99 736.59,359.50 736.95,354.58 737.30,360.63 737.65,381.55 738.00,391.24 738.35,405.20 738.70,415.03 739.05,425.58 739.41,435.45 739.76,438.54 740.11,444.17 740.46,447.05 740.81,451.27 741.16,442.35 741.51,445.02 741.87,446.73 742.22,433.71 742.57,425.57 742.92,408.97 743.27,381.08 743.62,358.54 743.97,351.11 744.33,387.90 744.68,390.35 745.03,365.42 745.38,357.67 745.73,370.00 746.08,381.51 746.43,401.95 746.79,405.97 747.14,419.10 747.49,428.12 747.84,437.08 748.19,442.96 748.54,447.42 748.89,445.47 749.24,451.35 749.60,444.65 749.95,444.16 750.30,444.50 750.65,433.62 751.00,423.08 751.35,413.25 751.70,382.86 752.06,365.00 752.41,362.62 752.76,395.04 753.11,397.88 753.46,374.92 753.81,369.29 754.16,376.80 754.52,393.82 754.87,401.31 755.22,413.10 755.57,422.91 755.92,431.37 756.27,440.48 756.62,442.64 756.98,437.69 757.33,447.93 757.68,452.06 758.03,447.63 758.38,447.51 758.73,446.58 759.08,446.28 759.44,439.19 759.79,438.38 760.14,433.73 760.49,430.97 760.84,429.39 761.19,437.55 761.54,431.95 761.90,439.50 762.25,429.44 762.60,435.48 762.95,431.54 763.30,432.96 763.65,433.12 764.00,438.99 764.36,438.30 764.71,443.46 765.06,439.90 765.41,445.50 765.76,442.26 766.11,447.77 766.46,454.42 766.82,447.04 767.17,451.02 767.52,449.41 767.87,442.35 768.22,439.17 768.57,433.30 768.92,428.30 769.28,427.15 769.63,432.56 769.98,432.63 770.33,432.21 770.68,431.79 771.03,434.12 771.38,436.75 771.74,439.05 772.09,436.87 772.44,441.44 772.79,437.92 773.14,443.20 773.49,442.23 773.84,441.38 774.20,445.47 774.55,450.84 774.90,446.91 775.25,447.35 775.60,449.91 775.95,434.33 776.30,422.58 776.66,393.02 777.01,351.13 777.36,327.85 777.71,320.97 778.06,366.32 778.41,364.72 778.76,334.94 779.12,332.33 779.47,342.16 779.82,366.91 780.17,380.39 780.52,391.11 780.87,404.42 781.22,425.65 781.58,431.95 781.93,439.27 782.28,440.83 782.63,445.47 782.98,447.80 783.33,445.07 783.68,446.53 784.04,444.12 784.39,435.50 784.74,423.59 785.09,397.62 785.44,363.89 785.79,339.73 786.14,334.64 786.50,370.97 786.85,374.16 787.20,344.26 787.55,342.09 787.90,350.43 788.25,369.45 788.60,385.31 788.96,395.58 789.31,412.39 789.66,425.04 790.01,432.67 790.36,438.86 790.71,441.67 791.06,447.53 791.41,450.55 791.77,441.82 792.12,444.44 792.47,444.54 792.82,436.31 793.17,425.91 793.52,403.99 793.87,370.27 794.23,346.38 794.58,345.35 794.93,379.09 795.28,380.17 795.63,355.94 795.98,347.15 796.33,362.73 796.69,376.17 797.04,394.82 797.39,406.37 797.74,415.05 798.09,426.62 798.44,433.00 798.79,439.10 799.15,440.03 799.50,444.86 799.85,450.85 800.20,445.06 800.55,443.47 800.90,446.31 801.25,436.54 801.61,425.64 801.96,396.85 802.31,365.45 802.66,340.19 803.01,333.83 803.36,375.44 803.71,373.31 804.07,343.14 804.42,338.63 804.77,351.02 805.12,369.30 805.47,388.38 805.82,397.28 806.17,410.38 806.53,426.38 806.88,433.09 807.23,437.12 807.58,444.73 807.93,445.14 808.28,447.64 808.63,444.94 808.99,446.22 809.34,444.08 809.69,436.63 810.04,423.15 810.39,407.62 810.74,380.64 811.09,355.87 811.45,356.60 811.80,384.92 812.15,388.78 812.50,359.91 812.85,355.20 813.20,370.38 813.55,384.40 813.91,400.86 814.26,406.37 814.61,420.64 814.96,430.50 815.31,437.70 815.66,439.96 816.01,444.22 816.37,447.42 816.72,449.11 817.07,449.91 817.42,451.89 817.77,445.21 818.12,446.90 818.47,440.35 818.83,431.49 819.18,433.65 819.53,433.22 819.88,428.55 820.23,435.46 820.58,432.28 820.93,432.22 821.29,434.93 821.64,434.59 821.99,438.14 822.34,432.45 822.69,437.83 823.04,440.17 823.39,443.10 823.75,444.07 824.10,439.52 824.45,445.30 824.80,445.29 825.15,447.47 825.50,450.20 825.85,451.07 826.21,450.27 826.56,448.27 826.91,437.18 827.26,431.18 827.61,430.70 827.96,432.51 828.31,427.85 828.67,436.51 829.02,438.91 829.37,434.02 829.72,430.72 830.07,432.39 830.42,438.06 830.77,431.48 831.12,440.46 831.48,440.15 831.83,435.64 832.18,438.86 832.53,440.61 832.88,443.05 833.23,444.60 833.58,449.89 833.94,447.87 834.29,446.96 834.64,447.12 834.99,436.76 835.34,424.57 835.69,383.37 836.04,346.81 836.40,319.42 836.75,311.18 837.10,359.03 837.45,355.09 837.80,323.62 838.15,317.11 838.50,331.17 838.86,355.90 839.21,371.90 839.56,385.65 839.91,400.88 840.26,426.45 840.61,433.74 840.96,439.08 841.32,440.09 841.67,446.48 842.02,451.04 842.37,441.28 842.72,445.22 843.07,445.28 843.42,435.63 843.78,425.76 844.13,401.79 844.48,364.20 844.83,345.01 845.18,336.41 845.53,378.84 845.88,374.65 846.24,352.49 846.59,345.17 846.94,358.29 847.29,375.86 847.64,389.55 847.99,401.56 848.34,412.73 848.70,427.69 849.05,433.73 849.40,438.64 849.75,430.58 850.10,447.60 850.45,449.83 850.80,441.76 851.16,444.98 851.51,446.92 851.86,433.07 852.21,425.91 852.56,403.95 852.91,371.11 853.26,345.21 853.62,338.20 853.97,380.01 854.32,379.99 854.67,349.41 855.02,349.12 855.37,360.33 855.72,373.27 856.08,393.51 856.43,401.19 856.78,414.77 857.13,426.33 857.48,431.81 857.83,438.17 858.18,442.35 858.54,445.49 858.89,448.72 859.24,444.86 859.59,446.27 859.94,446.45 860.29,434.98 860.64,425.27 861.00,394.43 861.35,360.93 861.70,331.63 862.05,331.18 862.40,372.80 862.75,373.82 863.10,344.40 863.46,337.96 863.81,344.87 864.16,367.06 864.51,384.32 864.86,392.29 865.21,406.98 865.56,425.75 865.92,433.97 866.27,438.62 866.62,444.12 866.97,446.91 867.32,450.10 867.67,444.25 868.02,446.27 868.38,445.00 868.73,434.60 869.08,424.60 869.43,409.36 869.78,378.21 870.13,357.20 870.48,358.26 870.83,386.23 871.19,388.92 871.54,365.66 871.89,356.47 872.24,367.55 872.59,386.10 872.94,402.88 873.29,409.61 873.65,420.23 874.00,430.11 874.35,438.33 874.70,441.46 875.05,444.15 875.40,443.38 875.75,448.36 876.11,452.29 876.46,448.10 876.81,449.81 877.16,449.26 877.51,442.15 877.86,438.94 878.21,431.93 878.57,426.47 878.92,427.59 879.27,432.37 879.62,439.06 879.97,437.57 880.32,436.49 880.67,434.23 881.03,433.20 881.38,440.28 881.73,437.40 882.08,439.40 882.43,438.65 882.78,438.54 883.13,443.91 883.49,440.95 883.84,447.89 884.19,449.04 884.54,449.15 884.89,455.21 885.24,449.20 885.59,445.42 885.95,443.04 886.30,437.13 886.65,428.31 887.00,431.61 887.35,434.47 887.70,435.74 888.05,435.69 888.41,436.11 888.76,435.13 889.11,434.69 889.46,437.08 889.81,435.84 890.16,436.38 890.51,442.49 890.87,439.30 891.22,443.31 891.57,438.56 891.92,440.00 892.27,447.40 892.62,448.74 892.97,446.57 893.33,449.60 893.68,447.33 894.03,433.41 894.38,423.27 894.73,400.42 895.08,364.31 895.43,344.39 895.79,339.50 896.14,377.39 896.49,375.93 896.84,349.00 897.19,347.52 897.54,358.98 897.89,374.11 898.25,389.97 898.60,402.42 898.95,412.23 899.30,425.46 899.65,432.40 900.00,437.88 900.35,440.85 900.71,447.15 901.06,448.31 901.41,444.59 901.76,443.69 902.11,445.48 902.46,435.87 902.81,425.59 903.17,401.84 903.52,369.65 903.87,345.45 904.22,345.71 904.57,377.35 904.92,380.50 905.27,353.90 905.63,346.48 905.98,358.03 906.33,376.41 906.68,393.40 907.03,402.79 907.38,416.14 907.73,427.55 908.09,431.90 908.44,439.71 908.79,445.88 909.14,444.61 909.49,449.99 909.84,443.02 910.19,444.92 910.54,445.12 910.90,435.71 911.25,423.34 911.60,413.28 911.95,377.40 912.30,360.88 912.65,355.06 913.00,390.81 913.36,387.66 913.71,366.39 914.06,360.01 914.41,371.56 914.76,383.49 915.11,398.22 915.46,411.86 915.82,419.60 916.17,428.51 916.52,438.17 916.87,443.12 917.22,440.02 917.57,444.16 917.92,450.94 918.28,442.06 918.63,443.59 918.98,446.89 919.33,433.91 919.68,431.29 920.03,401.10 920.38,370.18 920.74,348.07 921.09,346.58 921.44,379.69 921.79,379.35 922.14,355.93 922.49,352.41 922.84,362.61 923.20,378.52 923.55,389.09 923.90,401.41 924.25,413.57 924.60,425.81 924.95,434.69 925.30,439.06 925.66,442.55 926.01,444.60 926.36,447.59 926.71,441.89 927.06,444.44 927.41,444.94 927.76,433.39 928.12,424.67 928.47,412.46 928.82,380.34 929.17,361.95 929.52,356.50 929.87,388.02 930.22,390.25 930.58,366.32 930.93,362.58 931.28,370.36 931.63,384.93 931.98,398.87 932.33,406.03 932.68,421.54 933.04,430.53 933.39,438.40 933.74,440.21 934.09,440.69 934.44,444.35 934.79,445.73 935.14,454.96 935.50,447.39 935.85,450.87 936.20,444.25 936.55,441.01 936.90,432.57 937.25,433.11 937.60,432.27 937.96,433.94 938.31,431.70 938.66,436.29 939.01,438.35 939.36,435.09 939.71,432.43 940.06,435.64 940.42,435.03 940.77,434.15 941.12,437.43 941.47,437.36 941.82,443.35 942.17,439.56 942.52,437.85 942.88,445.52 943.23,453.01 943.58,454.20 943.93,448.73 944.28,445.95 944.63,443.37 944.98,440.06 945.34,434.45 945.69,434.82 946.04,429.32 946.39,427.04 946.74,436.47 947.09,434.87 947.44,431.95 947.80,432.38 948.15,434.43 948.50,436.88 948.85,433.75 949.20,433.37 949.55,435.24 949.90,441.04 950.26,439.29 950.61,440.10 950.96,443.85 951.31,444.97 951.66,449.95 952.01,447.13 952.36,450.03 952.71,447.92 953.07,434.02 953.42,426.17 953.77,410.71 954.12,378.03 954.47,357.83 954.82,350.42 955.17,388.82 955.53,386.02 955.88,361.57 956.23,358.07 956.58,364.36 956.93,383.36 957.28,397.65 957.63,406.43 957.99,419.05 958.34,429.70 958.69,434.40 959.04,440.05 959.39,442.51 959.74,445.98 960.09,449.05 960.45,443.93 960.80,446.92 961.15,445.79 961.50,433.45 961.85,425.95 962.20,402.65 962.55,375.38 962.91,349.49 963.26,347.32 963.61,386.20 963.96,386.62 964.31,356.58 964.66,350.89 965.01,362.22 965.37,380.20 965.72,395.64 966.07,404.05 966.42,416.27 966.77,426.33 967.12,435.84 967.47,438.99 967.83,441.80 968.18,445.68 968.53,451.41 968.88,444.35 969.23,444.67 969.58,446.26 969.93,433.38 970.29,423.84 970.64,406.20 970.99,379.21 971.34,355.59 971.69,350.57 972.04,383.67 972.39,383.78 972.75,363.60 973.10,356.98 973.45,363.48 973.80,385.82 974.15,400.77 974.50,409.86 974.85,417.90 975.21,429.21 975.56,435.26 975.91,439.78 976.26,440.45 976.61,447.76 976.96,448.77 977.31,441.98 977.67,444.47 978.02,444.55 978.37,433.77 978.72,423.95 979.07,399.18 979.42,367.94 979.77,348.24 980.13,342.97 980.48,375.92 980.83,380.14 981.18,352.37 981.53,344.17 981.88,356.22 982.23,372.90 982.59,391.26 982.94,401.72 983.29,415.33 983.64,427.75 983.99,434.26 984.34,437.88 984.69,445.15 985.05,447.63 985.40,448.98 985.75,444.69 986.10,445.70 986.45,447.81 986.80,435.10 987.15,425.77 987.51,408.38 987.86,383.38 988.21,360.29 988.56,359.54 988.91,392.94 989.26,389.31 989.61,366.91 989.97,363.68 990.32,372.11 990.67,384.73 991.02,400.75 991.37,414.67 991.72,422.13 992.07,429.68 992.42,437.01 992.78,443.38 993.13,445.32 993.48,447.91 993.83,446.25 994.18,453.33 994.53,447.49 994.88,451.48 995.24,443.69 995.59,438.35 995.94,437.19 996.29,431.12 996.64,429.05 996.99,433.76 997.34,433.47 997.70,434.71 998.05,430.97 998.40,435.75 998.75,436.06 999.10,434.41 999.45,435.00 999.80,437.42 1000.16,434.92 1000.51,442.87 1000.86,441.47 1001.21,443.22 1001.56,444.67 1001.91,446.21 1002.26,449.06 1002.62,451.53 1002.97,448.58 1003.32,444.85 1003.67,441.12 1004.02,442.72 1004.37,436.00 1004.72,427.15 1005.08,434.06 1005.43,435.42 1005.78,437.77 1006.13,431.66 1006.48,435.13 1006.83,434.38 1007.18,436.75 1007.54,430.94 1007.89,431.35 1008.24,435.57 1008.59,434.92 1008.94,439.51 1009.29,443.28 1009.64,445.91 1010.00,443.27 1010.35,447.33 1010.70,450.01 1011.05,447.73 1011.40,449.88 1011.75,447.25 1012.10,433.65 1012.46,423.17 1012.81,406.90 1013.16,374.55 1013.51,352.37 1013.86,346.84 1014.21,385.72 1014.56,384.24 1014.92,358.66 1015.27,351.53 1015.62,365.14 1015.97,384.05 1016.32,396.41 1016.67,403.14 1017.02,418.40 1017.38,426.94 1017.73,436.28 1018.08,440.85 1018.43,443.52 1018.78,447.51 1019.13,449.68 1019.48,442.80 1019.84,445.69 1020.19,444.97 1020.54,433.65 1020.89,425.25 1021.24,406.93 1021.59,376.64 1021.94,357.14 1022.30,353.54 1022.65,387.67 1023.00,386.45 1023.35,362.54 1023.70,360.65 1024.05,367.68 1024.40,383.02 1024.76,399.34 1025.11,405.97 1025.46,420.35 1025.81,429.22 1026.16,436.44 1026.51,441.17 1026.86,443.70 1027.22,445.31 1027.57,451.00 1027.92,443.01 1028.27,445.45 1028.62,445.21 1028.97,433.61 1029.32,422.51 1029.68,407.77 1030.03,371.30 1030.38,352.87 1030.73,348.84 1031.08,387.58 1031.43,381.79 1031.78,360.93 1032.13,355.51 1032.49,365.45 1032.84,382.41 1033.19,397.22 1033.54,407.36 1033.89,417.14 1034.24,427.88 1034.59,434.07 1034.95,438.51 1035.30,440.31 1035.65,446.45 1036.00,448.79 1036.35,442.23 1036.70,444.38 1037.05,446.36 1037.41,436.20 1037.76,423.39 1038.11,403.19 1038.46,372.99 1038.81,348.75 1039.16,349.11 1039.51,380.29 1039.87,379.47 1040.22,353.07 1040.57,353.95 1040.92,360.23 1041.27,376.42 1041.62,396.48 1041.97,403.52 1042.33,417.05 1042.68,427.69 1043.03,435.74 1043.38,440.03 1043.73,442.90 1044.08,445.63 1044.43,448.35 1044.79,441.31 1045.14,446.61 1045.49,444.61 1045.84,433.46 1046.19,423.81 1046.54,410.34 1046.89,381.31 1047.25,358.94 1047.60,355.79 1047.95,390.35 1048.30,387.43 1048.65,363.58 1049.00,361.42 1049.35,371.68 1049.71,385.05 1050.06,398.02 1050.41,407.99 1050.76,419.52 1051.11,428.26 1051.46,435.99 1051.81,441.93 1052.17,439.64 1052.52,444.27 1052.87,450.08 1053.22,453.45 1053.57,452.22 1053.92,447.32 1054.27,443.13 1054.63,441.93 1054.98,434.44 1055.33,435.20 1055.68,429.33 1056.03,432.11 1056.38,431.30 1056.73,432.57 1057.09,439.29 1057.44,429.49 1057.79,436.08 1058.14,430.20 1058.49,431.42 1058.84,439.86 1059.19,440.63 1059.55,433.76 1059.90,437.77 1060.25,440.60 1060.60,437.61 1060.95,442.97 1061.30,449.91 1061.65,447.87 1062.01,452.42 1062.36,450.89 1062.71,446.12 1063.06,438.29 1063.41,436.51 1063.76,430.73 1064.11,429.61 1064.47,428.93 1064.82,434.04 1065.17,436.62 1065.52,434.67 1065.87,434.12 1066.22,430.93 1066.57,438.08 1066.93,438.85 1067.28,441.55 1067.63,439.51 1067.98,436.92 1068.33,440.63 1068.68,441.71 1069.03,440.00 1069.39,444.72 1069.74,450.31 1070.09,447.05 1070.44,447.94 1070.79,449.85 1071.14,434.63 1071.49,426.03 1071.85,400.79 1072.20,364.14 1072.55,344.12 1072.90,340.75 1073.25,374.93 1073.60,378.86 1073.95,346.40 1074.30,342.95 1074.66,351.98 1075.01,372.34 1075.36,389.12 1075.71,401.73 1076.06,413.93 1076.41,425.09 1076.76,434.05 1077.12,439.49 1077.47,440.02 1077.82,445.82 1078.17,449.19 1078.52,441.51 1078.87,444.36 1079.22,446.90 1079.58,435.84 1079.93,423.78 1080.28,395.24 1080.63,362.56 1080.98,337.98 1081.33,331.83 1081.68,375.22 1082.04,369.95 1082.39,342.27 1082.74,340.11 1083.09,348.57 1083.44,367.15 1083.79,387.94 1084.14,397.02 1084.50,408.41 1084.85,426.85 1085.20,432.25 1085.55,438.95 1085.90,439.78 1086.25,445.31 1086.60,449.28 1086.96,447.16 1087.31,446.53 1087.66,436.94 1088.01,424.63 1088.36,402.30 1088.71,367.52 1089.06,343.76 1089.42,340.78 1089.77,378.22 1090.12,376.66 1090.47,351.83 1090.82,343.33 1091.17,351.56 1091.52,371.01 1091.88,385.83 1092.23,402.79 1092.58,411.80 1092.93,427.61 1093.28,431.52 1093.63,438.02 1093.98,440.76 1094.34,444.89 1094.69,450.93 1095.04,444.69 1095.39,444.05 1095.74,444.72 1096.09,435.26 1096.44,426.24 1096.80,403.39 1097.15,363.58 1097.50,341.00 1097.85,339.16 1098.20,375.43 1098.55,374.51 1098.90,352.73 1099.26,342.02 1099.61,351.35 1099.96,369.96 1100.31,386.32 1100.66,400.45 1101.01,411.99 1101.36,428.05 1101.72,432.02 1102.07,437.44 1102.42,441.88 1102.77,447.72 1103.12,450.75 1103.47,443.52 1103.82,443.62 1104.18,446.08 1104.53,433.58 1104.88,425.61 1105.23,400.60 1105.58,365.88 1105.93,341.83 1106.28,334.05 1106.64,376.09 1106.99,376.44 1107.34,346.01 1107.69,342.09 1108.04,350.19 1108.39,369.60 1108.74,385.35 1109.10,399.37 1109.45,411.77 1109.80,426.86 1110.15,431.33 1110.50,436.44 1110.85,441.96 1111.20,442.50 1111.56,449.43 1111.91,450.66 1112.26,453.22 1112.61,449.22 1112.96,449.97 1113.31,441.29 1113.66,428.63 1114.01,416.44 1114.37,408.88 1114.72,422.33 1115.07,435.65 1115.42,435.96 1115.77,432.59 1116.12,433.37 1116.47,427.88 1116.83,430.59 1117.18,434.44 1117.53,435.94 1117.88,439.39 1118.23,438.18 1118.58,443.93 1118.93,441.03 1119.29,445.24 1119.64,441.30 1119.99,446.63 1120.34,448.41 1120.69,452.74 1121.04,445.04 1121.39,445.97 1121.75,438.87 1122.10,430.39 1122.45,428.21 1122.80,433.21 1123.15,435.04 1123.50,436.44 1123.85,439.38 1124.21,431.64 1124.56,433.37 1124.91,433.27 1125.26,435.68 1125.61,435.92 1125.96,437.88 1126.31,436.64 1126.67,440.91 1127.02,438.17 1127.37,439.78 1127.72,440.24 1128.07,444.99 1128.42,450.78 1128.77,454.41 1129.13,454.90 1129.48,456.75 1129.83,434.72 1130.18,425.51 1130.53,386.25 1130.88,350.19 1131.23,323.12 1131.59,315.15 1131.94,364.57 1132.29,365.15 1132.64,330.58 1132.99,324.11 1133.34,339.11 1133.69,357.68 1134.05,373.99 1134.40,385.83 1134.75,401.28 1135.10,425.65 1135.45,434.56 1135.80,438.48 1136.15,441.73 1136.51,447.80 1136.86,448.41 1137.21,452.13 1137.56,452.30 1137.91,453.42 1138.26,435.91 1138.61,425.00 1138.97,402.13 1139.32,370.42 1139.67,348.92 1140.02,342.00 1140.37,380.91 1140.72,380.72 1141.07,350.14 1141.43,345.09 1141.78,358.16 1142.13,378.32 1142.48,389.18 1142.83,403.45 1143.18,415.25 1143.53,425.80 1143.89,431.62 1144.24,438.87 1144.59,441.39 1144.94,444.46 1145.29,449.43 1145.64,451.86 1145.99,454.73 1146.35,455.94 1146.70,433.48 1147.05,423.18 1147.40,394.88 1147.75,353.93 1148.10,331.52 1148.45,323.08 1148.81,367.89 1149.16,365.63 1149.51,336.63 1149.86,333.81 1150.21,342.42 1150.56,361.40 1150.91,383.78 1151.27,395.91 1151.62,407.00 1151.97,425.90 1152.32,431.37 1152.67,438.20 1153.02,440.28 1153.37,445.15 1153.72,450.39 1154.08,451.48 1154.43,452.05 1154.78,454.17 1155.13,434.98 1155.48,423.53 1155.83,403.09 1156.18,366.84 1156.54,343.27 1156.89,338.85 1157.24,376.09 1157.59,379.07 1157.94,350.40 1158.29,345.05 1158.64,358.47 1159.00,371.34 1159.35,386.46 1159.70,400.18 1160.05,413.18 1160.40,427.15 1160.75,433.22 1161.10,438.47 1161.46,442.35 1161.81,444.22 1162.16,450.02 1162.51,452.39 1162.86,452.78 1163.21,456.03 1163.56,435.57 1163.92,424.15 1164.27,399.90 1164.62,370.22 1164.97,349.32 1165.32,338.85 1165.67,382.95 1166.02,380.07 1166.38,352.74 1166.73,344.04 1167.08,359.17 1167.43,377.32 1167.78,393.01 1168.13,403.04 1168.48,415.42 1168.84,425.28 1169.19,433.01 1169.54,437.34 1169.89,443.95 1170.24,444.26 1170.59,444.83 1170.94,452.87 1171.30,446.90 1171.65,451.30 1172.00,443.43 1172.35,436.07 1172.70,435.16 1173.05,427.32 1173.40,431.19 1173.76,432.22 1174.11,429.86 1174.46,434.95 1174.81,439.29 1175.16,436.98 1175.51,432.73 1175.86,435.94 1176.22,439.95 1176.57,434.41 1176.92,440.31 1177.27,436.41 1177.62,442.77 1177.97,445.87 1178.32,442.60 1178.68,442.79 1179.03,444.90 1179.38,449.81 1179.73,453.38 1180.08,449.07 1180.43,447.62 1180.78,441.41 1181.14,439.36 1181.49,435.72 1181.84,426.25 1182.19,429.18 1182.54,436.12 1182.89,434.82 1183.24,439.40 1183.60,430.74 1183.95,432.02 1184.30,432.45 1184.65,436.53 1185.00,437.90 1185.35,435.81 1185.70,441.80 1186.06,445.43 1186.41,446.50 1186.76,440.07 1187.11,446.83 1187.46,451.20 1187.81,453.85 1188.16,457.66 1188.52,457.22 1188.87,433.94 1189.22,425.43 1189.57,403.69 1189.92,367.18 1190.27,345.26 1190.62,341.32 1190.98,384.04 1191.33,377.42 1191.68,354.02 1192.03,351.66 1192.38,356.28 1192.73,379.48 1193.08,389.18 1193.44,406.45 1193.79,416.47 1194.14,426.79 1194.49,433.01 1194.84,438.36 1195.19,441.82 1195.54,447.49 1195.89,448.63 1196.25,451.97 1196.60,451.63 1196.95,453.61 1197.30,434.26 1197.65,425.82 1198.00,403.71 1198.35,376.82 1198.71,356.11 1199.06,350.85 1199.41,387.07 1199.76,386.60 1200.11,360.51 1200.46,354.56 1200.81,367.10 1201.17,384.29 1201.52,397.28 1201.87,405.13 1202.22,417.27 1202.57,428.94 1202.92,434.88 1203.27,439.25 1203.63,440.83 1203.98,447.20 1204.33,451.28 1204.68,449.38 1205.03,452.58 1205.38,454.98 1205.73,434.06 1206.09,424.08 1206.44,398.13 1206.79,365.29 1207.14,339.48 1207.49,337.33 1207.84,376.24 1208.19,376.66 1208.55,345.94 1208.90,339.51 1209.25,354.65 1209.60,374.26 1209.95,389.68 1210.30,397.24 1210.65,412.07 1211.01,428.42 1211.36,431.84 1211.71,438.24 1212.06,443.10 1212.41,445.00 1212.76,449.47 1213.11,449.92 1213.47,452.09 1213.82,452.84 1214.17,433.51 1214.52,424.84 1214.87,401.53 1215.22,371.12 1215.57,347.83 1215.93,346.99 1216.28,380.64 1216.63,384.54 1216.98,352.88 1217.33,352.48 1217.68,360.16 1218.03,375.19 1218.39,390.96 1218.74,401.20 1219.09,415.73 1219.44,428.21 1219.79,432.02 1220.14,439.64 1220.49,440.26 1220.85,446.32 1221.20,449.73 1221.55,451.11 1221.90,453.22 1222.25,453.01 1222.60,434.66 1222.95,425.68 1223.31,402.32 1223.66,372.26 1224.01,344.34 1224.36,345.15 1224.71,380.96 1225.06,379.36 1225.41,354.59 1225.77,345.38 1226.12,356.71 1226.47,377.21 1226.82,392.44 1227.17,400.87 1227.52,414.45 1227.87,426.21 1228.23,433.63 1228.58,438.12 1228.93,441.05 1229.28,442.11 1229.63,449.99 1229.98,447.62 1230.33,453.72 1230.69,451.25 1231.04,447.90 1231.39,436.19 1231.74,438.55 1232.09,433.24 1232.44,430.52 1232.79,429.71 1233.15,432.28 1233.50,439.37 1233.85,436.19 1234.20,431.74 1234.55,436.34 1234.90,437.95 1235.25,432.91 1235.60,441.90 1235.96,442.58 1236.31,443.00 1236.66,438.46 1237.01,444.35 1237.36,442.55 1237.71,445.41 1238.06,445.02 1238.42,454.61 1238.77,453.91 1239.12,450.23 1239.47,444.13 1239.82,443.50 1240.17,435.42 1240.52,430.65 1240.88,434.23 1241.23,433.19 1241.58,437.80 1241.93,432.11 1242.28,439.67 1242.63,436.90 1242.98,432.01 1243.34,436.95 1243.69,435.20 1244.04,438.76 1244.39,434.20 1244.74,439.50 1245.09,442.90 1245.44,445.90 1245.80,443.29 1246.15,444.90 1246.50,448.66 1246.85,453.30 1247.20,456.16 1247.55,455.24 1247.90,435.39 1248.26,424.21 1248.61,404.00 1248.96,374.13 1249.31,355.26 1249.66,349.26 1250.01,384.20 1250.36,387.57 1250.72,361.99 1251.07,354.50 1251.42,367.14 1251.77,383.45 1252.12,397.02 1252.47,410.22 1252.82,419.24 1253.18,426.60 1253.53,436.66 1253.88,439.65 1254.23,443.29 1254.58,446.72 1254.93,449.44 1255.28,452.00 1255.64,451.67 1255.99,452.32 1256.34,435.79 1256.69,425.80 1257.04,397.63 1257.39,364.48 1257.74,343.28 1258.10,342.45 1258.45,380.92 1258.80,376.12 1259.15,348.91 1259.50,345.01 1259.85,356.85 1260.20,374.96 1260.56,390.62 1260.91,401.18 1261.26,412.46 1261.61,426.99 1261.96,433.63 1262.31,438.98 1262.66,440.98 1263.02,444.27 1263.37,450.73 1263.72,450.21 1264.07,452.82 1264.42,455.15 1264.77,436.42 1265.12,423.08 1265.48,405.62 1265.83,372.94 1266.18,350.77 1266.53,341.70 1266.88,381.62 1267.23,384.29 1267.58,356.00 1267.94,349.05 1268.29,359.89 1268.64,379.31 1268.99,390.14 1269.34,402.64 1269.69,415.78 1270.04,427.33 1270.40,434.26 1270.75,440.35 1271.10,441.16 1271.45,446.85 1271.80,448.88 1272.15,449.96 1272.50,454.09 1272.86,454.93 1273.21,435.52 1273.56,424.48 1273.91,404.59 1274.26,368.47 1274.61,346.11 1274.96,343.49 1275.31,376.11 1275.67,377.09 1276.02,351.60 1276.37,349.15 1276.72,355.30 1277.07,375.28 1277.42,387.90 1277.77,400.34 1278.13,414.43 1278.48,425.80 1278.83,432.73 1279.18,438.52 1279.53,440.50 1279.88,446.63 1280.23,450.89 1280.59,453.05 1280.94,452.95 1281.29,454.98 1281.64,436.33 1281.99,426.15 1282.34,391.28 1282.69,357.37 1283.05,327.83 1283.40,323.10 1283.75,365.53 1284.10,369.73 1284.45,334.72 1284.80,331.00 1285.15,341.39 1285.51,360.40 1285.86,382.53 1286.21,394.09 1286.56,405.27 1286.91,427.43 1287.26,434.47 1287.61,439.64 1287.97,441.38 1288.32,447.56 1288.67,444.51 1289.02,454.89 1289.37,452.03 1289.72,447.38 1290.07,444.45 1290.43,437.07 1290.78,433.45 1291.13,427.86 1291.48,425.92 1291.83,428.31 1292.18,432.82 1292.53,436.82 1292.89,434.90 1293.24,436.34 1293.59,435.31 1293.94,434.29 1294.29,436.45 1294.64,438.33 1294.99,442.53 1295.35,435.71 1295.70,443.09 1296.05,443.14 1296.40,443.29 1296.75,445.28 1297.10,446.04 1297.45,446.36 1297.81,450.15 1298.16,445.30 1298.51,446.66 1298.86,440.38 1299.21,436.31 1299.56,427.01 1299.91,433.64 1300.27,434.17 1300.62,431.30 1300.97,438.29 1301.32,439.17 1301.67,434.97 1302.02,433.38 1302.37,434.89 1302.73,438.34 1303.08,438.70 1303.43,440.67 1303.78,443.12 1304.13,441.48 1304.48,445.46 1304.83,442.63 1305.19,444.30 1305.54,448.00 1305.89,454.57 1306.24,456.11 1306.59,458.50 1306.94,436.87 1307.29,424.34 1307.65,392.98 1308.00,363.03 1308.35,335.84 1308.70,329.12 1309.05,375.06 1309.40,370.98 1309.75,344.42 1310.11,335.16 1310.46,346.22 1310.81,364.56 1311.16,382.60 1311.51,399.05 1311.86,408.56 1312.21,426.48 1312.57,433.76 1312.92,439.07 1313.27,441.64 1313.62,446.27 1313.97,449.87 1314.32,449.51 1314.67,454.44 1315.03,452.72 1315.38,436.38 1315.73,423.65 1316.08,394.20 1316.43,357.41 1316.78,331.56 1317.13,329.54 1317.48,370.52 1317.84,369.16 1318.19,341.01 1318.54,330.45 1318.89,343.42 1319.24,363.17 1319.59,380.53 1319.94,396.18 1320.30,408.90 1320.65,428.18 1321.00,431.70 1321.35,438.05 1321.70,439.87 1322.05,446.65 1322.40,449.95 1322.76,450.69 1323.11,452.04 1323.46,454.38 1323.81,435.07 1324.16,424.95 1324.51,395.65 1324.86,353.78 1325.22,328.54 1325.57,327.40 1325.92,371.09 1326.27,365.92 1326.62,339.08 1326.97,331.14 1327.32,345.36 1327.68,367.05 1328.03,380.17 1328.38,396.58 1328.73,405.62 1329.08,427.86 1329.43,433.61 1329.78,439.76 1330.14,442.54 1330.49,445.38 1330.84,451.09 1331.19,452.77 1331.54,455.10 1331.89,455.99 1332.24,434.94 1332.60,425.46 1332.95,397.45 1333.30,363.32 1333.65,340.97 1334.00,333.82 1334.35,372.35 1334.70,377.03 1335.06,346.00 1335.41,341.02 1335.76,355.70 1336.11,369.50 1336.46,391.44 1336.81,398.02 1337.16,410.29 1337.52,426.15 1337.87,432.36 1338.22,437.45 1338.57,441.86 1338.92,447.48 1339.27,442.61 1339.62,452.01 1339.98,452.18 1340.33,452.62 1340.68,433.18 1341.03,425.04 1341.38,399.96 1341.73,366.82 1342.08,350.58 1342.44,342.88 1342.79,383.12 1343.14,383.23 1343.49,354.20 1343.84,347.05 1344.19,361.36 1344.54,377.55 1344.90,392.28 1345.25,402.43 1345.60,415.98 1345.95,427.84 1346.30,434.89 1346.65,439.09 1347.00,437.41 1347.36,448.68 1347.71,446.27 1348.06,449.02 1348.41,447.78 1348.76,446.53 1349.11,449.46 1349.46,441.70 1349.82,431.76 1350.17,429.95 1350.52,426.96 1350.87,435.94 1351.22,430.65 1351.57,436.84 1351.92,432.53 1352.28,433.00 1352.63,434.38 1352.98,434.24 1353.33,440.25 1353.68,433.30 1354.03,435.28 1354.38,438.76 1354.74,440.19 1355.09,440.79 1355.44,442.46 1355.79,448.15 1356.14,447.25 1356.49,445.94 1356.84,447.71 1357.19,446.59 1357.55,448.52 1357.90,441.86 1358.25,436.84 1358.60,430.70 1358.95,426.54 1359.30,430.53 1359.65,432.99 1360.01,436.56 1360.36,438.16 1360.71,435.92 1361.06,428.62 1361.41,430.72 1361.76,434.49 1362.11,435.58 1362.47,441.24 1362.82,444.52 1363.17,445.92 1363.52,447.39 1363.87,442.59 1364.22,444.09 1364.57,449.20 1364.93,455.19 1365.28,457.81 1365.63,458.81 1365.98,436.90 1366.33,425.81 1366.68,403.71 1367.03,371.82 1367.39,348.76 1367.74,341.98 1368.09,382.63 1368.44,382.58 1368.79,351.55 1369.14,349.72 1369.49,357.87 1369.85,377.54 1370.20,390.55 1370.55,406.02 1370.90,415.30 1371.25,425.40 1371.60,433.79 1371.95,437.88 1372.31,442.57 1372.66,447.50 1373.01,449.80 1373.36,451.44 1373.71,455.20 1374.06,453.99 1374.41,435.30 1374.77,424.94 1375.12,397.80 1375.47,362.40 1375.82,342.35 1376.17,338.94 1376.52,374.27 1376.87,374.35 1377.23,348.51 1377.58,342.27 1377.93,355.23 1378.28,370.45 1378.63,388.04 1378.98,397.09 1379.33,412.75 1379.69,428.22 1380.04,431.76 1380.39,437.70 1380.74,440.48 1381.09,445.01 1381.44,448.45 1381.79,451.81 1382.15,451.97 1382.50,453.65 1382.85,435.36 1383.20,425.68 1383.55,404.44 1383.90,369.88 1384.25,346.40 1384.61,342.29 1384.96,377.87 1385.31,375.47 1385.66,351.40 1386.01,345.31 1386.36,360.69 1386.71,373.31 1387.07,390.58 1387.42,399.61 1387.77,414.21 1388.12,426.18 1388.47,433.01 1388.82,437.01 1389.17,441.78 1389.53,444.70 1389.88,448.07 1390.23,451.16 1390.58,453.39 1390.93,453.30 1391.28,434.93 1391.63,422.56 1391.99,397.34 1392.34,366.29 1392.69,341.74 1393.04,341.76 1393.39,374.34 1393.74,376.36 1394.09,353.25 1394.45,347.90 1394.80,352.91 1395.15,371.11 1395.50,388.66 1395.85,401.08 1396.20,413.61 1396.55,426.75 1396.90,431.62 1397.26,437.55 1397.61,443.16 1397.96,447.11 1398.31,451.12 1398.66,449.85 1399.01,452.04 1399.36,452.44 1399.72,435.27 1400.07,425.11 1400.42,404.88 1400.77,369.99 1401.12,346.57 1401.47,342.23 1401.82,380.12 1402.18,377.37 1402.53,349.64 1402.88,347.66 1403.23,355.29 1403.58,376.43 1403.93,392.70 1404.28,399.67 1404.64,415.29 1404.99,428.19 1405.34,431.31 1405.69,438.11 1406.04,442.73 1406.39,443.29 1406.74,445.03 1407.10,451.58 1407.45,448.28 1407.80,452.74 1408.15,441.86 1408.50,440.92 1408.85,435.88 1409.20,435.89 1409.56,434.19 1409.91,432.65 1410.26,437.30 1410.61,434.41 1410.96,430.61 1411.31,435.70 1411.66,430.73 1412.02,433.69 1412.37,434.79 1412.72,434.75 1413.07,438.86 1413.42,437.11 1413.77,444.68 1414.12,441.29 1414.48,441.63 1414.83,448.57 1415.18,451.11 1415.53,446.27 1415.88,449.84 1416.23,449.35 1416.58,445.43 1416.94,436.92 1417.29,433.60 1417.64,433.85 1417.99,426.20 1418.34,428.43 1418.69,431.18 1419.04,433.96 1419.40,433.59 1419.75,435.39 1420.10,428.67 1420.45,432.52 1420.80,438.98 1421.15,434.45 1421.50,439.39 1421.86,444.17 1422.21,438.03 1422.56,445.48 1422.91,441.82 1423.26,447.54 1423.61,449.42 1423.96,453.95 1424.32,454.97 1424.67,455.17 1425.02,433.50 1425.37,423.73 1425.72,402.86 1426.07,365.72 1426.42,348.08 1426.78,343.46 1427.13,379.03 1427.48,380.43 1427.83,352.34 1428.18,350.20 1428.53,359.96 1428.88,378.88 1429.24,391.99 1429.59,404.00 1429.94,413.05 1430.29,427.55 1430.64,434.15 1430.99,437.40 1431.34,442.63 1431.70,444.65 1432.05,449.39 1432.40,452.66 1432.75,452.61 1433.10,452.17 1433.45,435.75 1433.80,424.18 1434.16,399.30 1434.51,361.96 1434.86,338.25 1435.21,340.66 1435.56,377.02 1435.91,374.01 1436.26,349.17 1436.62,343.01 1436.97,353.64 1437.32,375.49 1437.67,391.86 1438.02,396.82 1438.37,412.41 1438.72,426.89 1439.07,432.85 1439.43,437.12 1439.78,441.28 1440.13,447.59 1440.48,448.99 1440.83,453.20 1441.18,453.22 1441.53,452.87 1441.89,435.09 1442.24,424.90 1442.59,403.53 1442.94,373.12 1443.29,350.08 1443.64,348.94 1443.99,385.94 1444.35,383.22 1444.70,359.42 1445.05,357.81 1445.40,367.00 1445.75,377.55 1446.10,394.92 1446.45,409.36 1446.81,416.52 1447.16,426.61 1447.51,436.69 1447.86,438.41 1448.21,442.70 1448.56,445.94 1448.91,448.68 1449.27,451.32 1449.62,453.98 1449.97,454.19 1450.32,434.49 1450.67,422.63 1451.02,398.88 1451.37,364.51 1451.73,342.97 1452.08,341.25 1452.43,379.75 1452.78,375.83 1453.13,348.86 1453.48,347.88 1453.83,355.20 1454.19,375.77 1454.54,393.97 1454.89,401.77 1455.24,412.26 1455.59,426.57 1455.94,431.94 1456.29,436.80 1456.65,443.27 1457.00,446.75 1457.35,447.90 1457.70,452.89 1458.05,453.37 1458.40,455.72 1458.75,435.46 1459.11,422.89 1459.46,407.34 1459.81,376.09 1460.16,358.76 1460.51,355.45 1460.86,391.54 1461.21,389.27 1461.57,362.31 1461.92,361.52 1462.27,367.48 1462.62,386.96 1462.97,397.83 1463.32,411.74 1463.67,418.70 1464.03,431.29 1464.38,438.61 1464.73,441.67 1465.08,439.35 1465.43,443.85 1465.78,449.49 1466.13,448.42 1466.49,453.82 1466.84,450.91 1467.19,447.38 1467.54,442.65 1467.89,439.03 1468.24,433.92 1468.59,429.84 1468.95,430.65 1469.30,435.28 1469.65,434.86 1470.00,436.73 1470.35,430.92 1470.70,437.53 1471.05,431.97 1471.41,432.21 1471.76,436.57 1472.11,437.45 1472.46,435.70 1472.81,444.81 1473.16,446.68 1473.51,441.83 1473.87,443.73 1474.22,448.29 1474.57,450.53 1474.92,451.72 1475.27,449.69 1475.62,441.97 1475.97,444.09 1476.33,433.39 1476.68,435.04 1477.03,427.07 1477.38,433.83 1477.73,431.01 1478.08,437.55 1478.43,433.95 1478.78,433.68 1479.14,440.13 1479.49,434.72 1479.84,435.77 1480.19,437.28 1480.54,441.01 1480.89,436.07 1481.24,442.99 1481.60,446.17 1481.95,444.16 1482.30,445.11 1482.65,447.94 1483.00,453.74 1483.35,454.45 1483.70,458.00 1484.06,433.50 1484.41,423.35 1484.76,409.05 1485.11,378.78 1485.46,355.28 1485.81,351.57 1486.16,385.93 1486.52,384.29 1486.87,362.88 1487.22,357.71 1487.57,367.12 1487.92,384.52 1488.27,397.48 1488.62,406.32 1488.98,419.03 1489.33,429.48 1489.68,434.85 1490.03,442.10 1490.38,440.28 1490.73,445.52 1491.08,450.57 1491.44,453.18 1491.79,452.05 1492.14,455.96 1492.49,434.01 1492.84,424.26 1493.19,383.11 1493.54,345.19 1493.90,313.30 1494.25,311.70 1494.60,355.68 1494.95,353.03 1495.30,322.53 1495.65,319.00 1496.00,331.65 1496.36,352.00 1496.71,368.88 1497.06,382.35 1497.41,399.74 1497.76,426.38 1498.11,433.57 1498.46,438.04 1498.82,442.19 1499.17,444.23 1499.52,450.00 1499.87,451.98 1500.22,452.92 1500.57,455.19 1500.92,436.51 1501.28,424.60 1501.63,387.20 1501.98,351.37 1502.33,325.39 1502.68,320.65 1503.03,362.21 1503.38,364.57 1503.74,331.44 1504.09,325.34 1504.44,341.18 1504.79,359.51 1505.14,374.74 1505.49,391.56 1505.84,402.70 1506.20,428.19 1506.55,433.10 1506.90,438.28 1507.25,442.87 1507.60,436.93 1507.95,425.86 1508.30,408.29 1508.66,373.79 1509.01,355.75 1509.36,349.50 1509.71,386.40 1510.06,383.18 1510.41,364.92 1510.76,354.39 1511.12,368.60 1511.47,384.91 1511.82,397.54 1512.17,408.19 1512.52,416.97 1512.87,427.05 1513.22,435.21 1513.58,441.83 1513.93,442.49 1514.28,446.20 1514.63,450.20 1514.98,452.36 1515.33,454.54 1515.68,455.02 1516.04,435.79 1516.39,425.91 1516.74,404.68 1517.09,367.33 1517.44,345.83 1517.79,343.45 1518.14,377.79 1518.49,377.92 1518.85,357.66 1519.20,352.73 1519.55,361.20 1519.90,376.85 1520.25,389.31 1520.60,406.67 1520.95,414.43 1521.31,425.65 1521.66,434.35 1522.01,437.81 1522.36,438.52 1522.71,449.53 1523.06,447.17 1523.41,450.64 1523.77,448.60 1524.12,452.55 1524.47,443.94 1524.82,444.62 1525.17,439.12 1525.52,431.91 1525.87,431.64 1526.23,432.27 1526.58,436.43 1526.93,431.33 1527.28,435.96 1527.63,433.78 1527.98,434.36 1528.33,430.97 1528.69,438.96 1529.04,433.33 1529.39,441.55 1529.74,436.68 1530.09,442.21 1530.44,442.05 1530.79,444.33 1531.15,442.87 1531.50,451.18 1531.85,447.76 1532.20,449.63 1532.55,445.66 1532.90,440.94 1533.25,437.36 1533.61,437.83 1533.96,428.38 1534.31,433.89 1534.66,428.78 1535.01,429.88 1535.36,439.22 1535.71,439.41 1536.07,430.91 1536.42,434.43 1536.77,432.83 1537.12,432.95 1537.47,433.24 1537.82,438.54 1538.17,436.98 1538.53,437.76 1538.88,440.47 1539.23,442.01 1539.58,444.35 1539.93,449.81 1540.28,452.54 1540.63,456.68 1540.99,456.99 1541.34,436.81 1541.69,425.92 1542.04,393.10 1542.39,360.36 1542.74,333.89 1543.09,331.37 1543.45,370.00 1543.80,371.43 1544.15,345.26 1544.50,338.27 1544.85,347.55 1545.20,369.70 1545.55,381.46 1545.91,399.24 1546.26,408.89 1546.61,425.38 1546.96,432.24 1547.31,439.26 1547.66,442.94 1548.01,445.16 1548.37,449.86 1548.72,452.84 1549.07,455.34 1549.42,453.46 1549.77,436.85 1550.12,425.21 1550.47,385.03 1550.83,350.21 1551.18,318.97 1551.53,320.04 1551.88,363.28 1552.23,364.34 1552.58,327.76 1552.93,322.57 1553.29,333.85 1553.64,354.17 1553.99,373.88 1554.34,390.93 1554.69,402.60 1555.04,428.34 1555.39,432.00 1555.75,438.45 1556.10,441.67 1556.45,444.44 1556.80,447.59 1557.15,450.87 1557.50,453.83 1557.85,452.65 1558.21,433.66 1558.56,425.50 1558.91,394.90 1559.26,354.62 1559.61,329.35 1559.96,325.43 1560.31,369.65 1560.66,371.94 1561.02,337.37 1561.37,336.33 1561.72,345.29 1562.07,365.93 1562.42,380.35 1562.77,395.52 1563.12,408.25 1563.48,425.46 1563.83,432.26 1564.18,436.25 1564.53,442.89 1564.88,447.40 1565.23,448.82 1565.58,451.28 1565.94,451.86 1566.29,454.24 1566.64,436.76 1566.99,424.48 1567.34,399.27 1567.69,359.91 1568.04,335.74 1568.40,331.09 1568.75,376.15 1569.10,372.93 1569.45,347.15 1569.80,335.96 1570.15,353.17 1570.50,368.06 1570.86,384.61 1571.21,399.61 1571.56,409.96 1571.91,428.03 1572.26,434.64 1572.61,438.77 1572.96,443.79 1573.32,446.20 1573.67,448.81 1574.02,449.62 1574.37,454.32 1574.72,454.19 1575.07,434.26 1575.42,425.11 1575.78,406.62 1576.13,374.27 1576.48,349.28 1576.83,348.79 1577.18,381.67 1577.53,386.07 1577.88,359.38 1578.24,354.40 1578.59,365.06 1578.94,382.16 1579.29,395.80 1579.64,403.05 1579.99,416.20 1580.34,425.24 1580.70,435.29 1581.05,440.44 1581.40,444.27 1581.75,445.85 1582.10,452.08 1582.45,447.59 1582.80,451.80 1583.16,453.54 1583.51,445.38 1583.86,440.78 1584.21,437.64 1584.56,433.10 1584.91,428.66 1585.26,427.06 1585.62,432.81 1585.97,438.12 1586.32,439.48 1586.67,435.37 1587.02,435.45 1587.37,435.18 1587.72,436.35 1588.08,439.32 1588.43,441.80 1588.78,436.17 1589.13,437.42 1589.48,440.90 1589.83,437.96 1590.18,445.16 1590.54,446.40 1590.89,450.93 1591.24,449.60 1591.59,446.13 1591.94,443.54 1592.29,437.40 1592.64,433.79 1593.00,432.72 1593.35,427.44 1593.70,427.99 1594.05,436.21 1594.40,438.96 1594.75,439.71 1595.10,436.11 1595.46,435.99 1595.81,437.22 1596.16,438.96 1596.51,438.98 1596.86,441.76 1597.21,435.89 1597.56,445.50 1597.92,447.44 1598.27,440.05 1598.62,446.42 1598.97,448.54 1599.32,454.80 1599.67,458.12 1600.02,458.73 1600.37,433.36 1600.73,426.14 1601.08,393.02 1601.43,356.64 1601.78,328.32 1602.13,325.70 1602.48,364.83 1602.83,369.04 1603.19,336.60 1603.54,327.46 1603.89,342.68 1604.24,359.29 1604.59,383.76 1604.94,389.94 1605.29,406.58 1605.65,424.93 1606.00,432.35 1606.35,438.87 1606.70,440.59 1607.05,447.26 1607.40,449.40 1607.75,450.34 1608.11,454.69 1608.46,455.82 1608.81,433.68 1609.16,425.60 1609.51,396.43 1609.86,363.37 1610.21,341.46 1610.57,332.53 1610.92,375.30 1611.27,376.08 1611.62,343.50 1611.97,337.24 1612.32,353.13 1612.67,366.83 1613.03,389.80 1613.38,396.20 1613.73,410.61 1614.08,427.59 1614.43,433.42 1614.78,438.65 1615.13,440.93 1615.49,446.27 1615.84,449.78 1616.19,450.62 1616.54,453.99 1616.89,455.72 1617.24,435.03 1617.59,422.97 1617.95,394.47 1618.30,356.59 1618.65,326.42 1619.00,324.82 1619.35,323.41 1619.70,328.71 1620.05,337.56 1620.41,334.02 1620.76,348.17 1621.11,355.24 1621.46,362.32" fill="none" stroke="url(#vm)" stroke-width="2" stroke-linejoin="bevel"/>
<circle cx="80.50" cy="401.22" r="1.8" fill="#fff" stroke="#ffa06a" stroke-width="1.5"/>
<circle cx="150.43" cy="453.92" r="1.8" fill="#fff" stroke="#e8dc88" stroke-width="1.5"/>
<circle cx="220.36" cy="374.70" r="1.8" fill="#fff" stroke="#ffa06a" stroke-width="1.5"/>
<circle cx="290.30" cy="436.59" r="1.8" fill="#fff" stroke="#ffa06a" stroke-width="1.5"/>
<circle cx="360.23" cy="445.08" r="1.8" fill="#fff" stroke="#ffa06a" stroke-width="1.5"/>
<circle cx="430.16" cy="433.41" r="1.8" fill="#fff" stroke="#ffa06a" stroke-width="1.5"/>
<circle cx="500.09" cy="386.72" r="1.8" fill="#fff" stroke="#ffa06a" stroke-width="1.5"/>
<circle cx="570.02" cy="416.08" r="1.8" fill="#fff" stroke="#ffa06a" stroke-width="1.5"/>
<circle cx="639.95" cy="448.97" r="1.8" fill="#fff" stroke="#e8dc88" stroke-width="1.5"/>
<circle cx="709.89" cy="434.12" r="1.8" fill="#fff" stroke="#ffa06a" stroke-width="1.5"/>
<circle cx="779.82" cy="366.91" r="1.8" fill="#fff" stroke="#ffa06a" stroke-width="1.5"/>
<circle cx="849.75" cy="430.58" r="1.8" fill="#fff" stroke="#ffa06a" stroke-width="1.5"/>
<circle cx="919.68" cy="431.29" r="1.8" fill="#fff" stroke="#ffa06a" stroke-width="1.5"/>
<circle cx="989.61" cy="366.91" r="1.8" fill="#fff" stroke="#ffa06a" stroke-width="1.5"/>
<circle cx="1059.55" cy="433.76" r="1.8" fill="#fff" stroke="#ffa06a" stroke-width="1.5"/>
<circle cx="1129.48" cy="456.75" r="1.8" fill="#fff" stroke="#e8dc88" stroke-width="1.5"/>
<circle cx="1199.41" cy="387.07" r="1.8" fill="#fff" stroke="#ffa06a" stroke-width="1.5"/>
<circle cx="1269.34" cy="402.64" r="1.8" fill="#fff" stroke="#ffa06a" stroke-width="1.5"/>
<circle cx="1339.27" cy="442.61" r="1.8" fill="#fff" stroke="#ffa06a" stroke-width="1.5"/>
<circle cx="1409.20" cy="435.89" r="1.8" fill="#fff" stroke="#ffa06a" stroke-width="1.5"/>
<circle cx="1479.14" cy="440.13" r="1.8" fill="#fff" stroke="#ffa06a" stroke-width="1.5"/>
<circle cx="1549.07" cy="455.34" r="1.8" fill="#fff" stroke="#e8dc88" stroke-width="1.5"/>
<circle cx="1619.00" cy="324.82" r="1.8" fill="#fff" stroke="#ffa06a" stroke-width="1.5"/>
<line x1="80.5" y1="449.50" x2="1613" y2="449.50" stroke="#3a3a3a" stroke-width="1" stroke-dasharray="3 1.8"/>
<circle cx="80.5" cy="449.50" r="3" fill="#333"/>
<path d="M1608.8,445.30 L1621,449.50 L1608.8,453.70 L1611,449.50 Z" fill="#333"/>
<text x="1625.30" y="451.60" font-size="10.6" fill="#666" text-anchor="start" font-weight="400" >75</text>
<line x1="80.5" y1="458.50" x2="1613" y2="458.50" stroke="#3a3a3a" stroke-width="1" stroke-dasharray="3 1.8"/>
<circle cx="80.5" cy="458.50" r="3" fill="#333"/>
<path d="M1608.8,454.30 L1621,458.50 L1608.8,462.70 L1611,458.50 Z" fill="#333"/>
<text x="1625.30" y="460.70" font-size="10.6" fill="#666" text-anchor="start" font-weight="400" >50</text>
<line x1="80.5" y1="476" x2="1622" y2="476" stroke="#8a8d94" stroke-width="1"/>
<line x1="80.5" y1="476" x2="80.5" y2="480" stroke="#6E7079" stroke-width="1"/>
<text x="80.50" y="491.50" font-size="10" fill="#6E7079" text-anchor="middle" font-weight="400" textLength="54" lengthAdjust="spacingAndGlyphs">08/04/2025</text>
<text x="80.50" y="501.00" font-size="10" fill="#6E7079" text-anchor="middle" font-weight="400" textLength="35" lengthAdjust="spacingAndGlyphs">19:00:0</text>
<line x1="150.43" y1="476" x2="150.43" y2="480" stroke="#6E7079" stroke-width="1"/>
<text x="150.43" y="491.50" font-size="10" fill="#6E7079" text-anchor="middle" font-weight="400" textLength="54" lengthAdjust="spacingAndGlyphs">17/04/2025</text>
<text x="150.43" y="501.00" font-size="10" fill="#6E7079" text-anchor="middle" font-weight="400" textLength="35" lengthAdjust="spacingAndGlyphs">02:00:0</text>
<line x1="220.36" y1="476" x2="220.36" y2="480" stroke="#6E7079" stroke-width="1"/>
<text x="220.36" y="491.50" font-size="10" fill="#6E7079" text-anchor="middle" font-weight="400" textLength="54" lengthAdjust="spacingAndGlyphs">25/04/2025</text>
<text x="220.36" y="501.00" font-size="10" fill="#6E7079" text-anchor="middle" font-weight="400" textLength="35" lengthAdjust="spacingAndGlyphs">09:00:0</text>
<line x1="290.3" y1="476" x2="290.3" y2="480" stroke="#6E7079" stroke-width="1"/>
<text x="290.30" y="491.50" font-size="10" fill="#6E7079" text-anchor="middle" font-weight="400" textLength="54" lengthAdjust="spacingAndGlyphs">03/05/2025</text>
<text x="290.30" y="501.00" font-size="10" fill="#6E7079" text-anchor="middle" font-weight="400" textLength="35" lengthAdjust="spacingAndGlyphs">16:00:0</text>
<line x1="360.23" y1="476" x2="360.23" y2="480" stroke="#6E7079" stroke-width="1"/>
<text x="360.23" y="491.50" font-size="10" fill="#6E7079" text-anchor="middle" font-weight="400" textLength="54" lengthAdjust="spacingAndGlyphs">11/05/2025</text>
<text x="360.23" y="501.00" font-size="10" fill="#6E7079" text-anchor="middle" font-weight="400" textLength="35" lengthAdjust="spacingAndGlyphs">23:00:0</text>
<line x1="430.16" y1="476" x2="430.16" y2="480" stroke="#6E7079" stroke-width="1"/>
<text x="430.16" y="491.50" font-size="10" fill="#6E7079" text-anchor="middle" font-weight="400" textLength="54" lengthAdjust="spacingAndGlyphs">20/05/2025</text>
<text x="430.16" y="501.00" font-size="10" fill="#6E7079" text-anchor="middle" font-weight="400" textLength="35" lengthAdjust="spacingAndGlyphs">06:00:0</text>
<line x1="500.09" y1="476" x2="500.09" y2="480" stroke="#6E7079" stroke-width="1"/>
<text x="500.09" y="491.50" font-size="10" fill="#6E7079" text-anchor="middle" font-weight="400" textLength="54" lengthAdjust="spacingAndGlyphs">28/05/2025</text>
<text x="500.09" y="501.00" font-size="10" fill="#6E7079" text-anchor="middle" font-weight="400" textLength="35" lengthAdjust="spacingAndGlyphs">13:00:0</text>
<line x1="570.02" y1="476" x2="570.02" y2="480" stroke="#6E7079" stroke-width="1"/>
<text x="570.02" y="491.50" font-size="10" fill="#6E7079" text-anchor="middle" font-weight="400" textLength="54" lengthAdjust="spacingAndGlyphs">05/06/2025</text>
<text x="570.02" y="501.00" font-size="10" fill="#6E7079" text-anchor="middle" font-weight="400" textLength="35" lengthAdjust="spacingAndGlyphs">20:00:0</text>
<line x1="639.95" y1="476" x2="639.95" y2="480" stroke="#6E7079" stroke-width="1"/>
<text x="639.95" y="491.50" font-size="10" fill="#6E7079" text-anchor="middle" font-weight="400" textLength="54" lengthAdjust="spacingAndGlyphs">14/06/2025</text>
<text x="639.95" y="501.00" font-size="10" fill="#6E7079" text-anchor="middle" font-weight="400" textLength="35" lengthAdjust="spacingAndGlyphs">03:00:0</text>
<line x1="709.89" y1="476" x2="709.89" y2="480" stroke="#6E7079" stroke-width="1"/>
<text x="709.89" y="491.50" font-size="10" fill="#6E7079" text-anchor="middle" font-weight="400" textLength="54" lengthAdjust="spacingAndGlyphs">22/06/2025</text>
<text x="709.89" y="501.00" font-size="10" fill="#6E7079" text-anchor="middle" font-weight="400" textLength="35" lengthAdjust="spacingAndGlyphs">10:00:0</text>
<line x1="779.82" y1="476" x2="779.82" y2="480" stroke="#6E7079" stroke-width="1"/>
<text x="779.82" y="491.50" font-size="10" fill="#6E7079" text-anchor="middle" font-weight="400" textLength="54" lengthAdjust="spacingAndGlyphs">30/06/2025</text>
<text x="779.82" y="501.00" font-size="10" fill="#6E7079" text-anchor="middle" font-weight="400" textLength="35" lengthAdjust="spacingAndGlyphs">17:00:0</text>
<line x1="849.75" y1="476" x2="849.75" y2="480" stroke="#6E7079" stroke-width="1"/>
<text x="849.75" y="491.50" font-size="10" fill="#6E7079" text-anchor="middle" font-weight="400" textLength="54" lengthAdjust="spacingAndGlyphs">09/07/2025</text>
<text x="849.75" y="501.00" font-size="10" fill="#6E7079" text-anchor="middle" font-weight="400" textLength="35" lengthAdjust="spacingAndGlyphs">00:00:0</text>
<line x1="919.68" y1="476" x2="919.68" y2="480" stroke="#6E7079" stroke-width="1"/>
<text x="919.68" y="491.50" font-size="10" fill="#6E7079" text-anchor="middle" font-weight="400" textLength="54" lengthAdjust="spacingAndGlyphs">17/07/2025</text>
<text x="919.68" y="501.00" font-size="10" fill="#6E7079" text-anchor="middle" font-weight="400" textLength="35" lengthAdjust="spacingAndGlyphs">07:00:0</text>
<line x1="989.61" y1="476" x2="989.61" y2="480" stroke="#6E7079" stroke-width="1"/>
<text x="989.61" y="491.50" font-size="10" fill="#6E7079" text-anchor="middle" font-weight="400" textLength="54" lengthAdjust="spacingAndGlyphs">25/07/2025</text>
<text x="989.61" y="501.00" font-size="10" fill="#6E7079" text-anchor="middle" font-weight="400" textLength="35" lengthAdjust="spacingAndGlyphs">14:00:0</text>
<line x1="1059.55" y1="476" x2="1059.55" y2="480" stroke="#6E7079" stroke-width="1"/>
<text x="1059.55" y="491.50" font-size="10" fill="#6E7079" text-anchor="middle" font-weight="400" textLength="54" lengthAdjust="spacingAndGlyphs">02/08/2025</text>
<text x="1059.55" y="501.00" font-size="10" fill="#6E7079" text-anchor="middle" font-weight="400" textLength="35" lengthAdjust="spacingAndGlyphs">21:00:0</text>
<line x1="1129.48" y1="476" x2="1129.48" y2="480" stroke="#6E7079" stroke-width="1"/>
<text x="1129.48" y="491.50" font-size="10" fill="#6E7079" text-anchor="middle" font-weight="400" textLength="54" lengthAdjust="spacingAndGlyphs">11/08/2025</text>
<text x="1129.48" y="501.00" font-size="10" fill="#6E7079" text-anchor="middle" font-weight="400" textLength="35" lengthAdjust="spacingAndGlyphs">05:00:0</text>
<line x1="1199.41" y1="476" x2="1199.41" y2="480" stroke="#6E7079" stroke-width="1"/>
<text x="1199.41" y="491.50" font-size="10" fill="#6E7079" text-anchor="middle" font-weight="400" textLength="54" lengthAdjust="spacingAndGlyphs">19/08/2025</text>
<text x="1199.41" y="501.00" font-size="10" fill="#6E7079" text-anchor="middle" font-weight="400" textLength="35" lengthAdjust="spacingAndGlyphs">12:00:0</text>
<line x1="1269.34" y1="476" x2="1269.34" y2="480" stroke="#6E7079" stroke-width="1"/>
<text x="1269.34" y="491.50" font-size="10" fill="#6E7079" text-anchor="middle" font-weight="400" textLength="54" lengthAdjust="spacingAndGlyphs">27/08/2025</text>
<text x="1269.34" y="501.00" font-size="10" fill="#6E7079" text-anchor="middle" font-weight="400" textLength="35" lengthAdjust="spacingAndGlyphs">19:00:0</text>
<line x1="1339.27" y1="476" x2="1339.27" y2="480" stroke="#6E7079" stroke-width="1"/>
<text x="1339.27" y="491.50" font-size="10" fill="#6E7079" text-anchor="middle" font-weight="400" textLength="54" lengthAdjust="spacingAndGlyphs">05/09/2025</text>
<text x="1339.27" y="501.00" font-size="10" fill="#6E7079" text-anchor="middle" font-weight="400" textLength="35" lengthAdjust="spacingAndGlyphs">02:00:0</text>
<line x1="1409.2" y1="476" x2="1409.2" y2="480" stroke="#6E7079" stroke-width="1"/>
<text x="1409.20" y="491.50" font-size="10" fill="#6E7079" text-anchor="middle" font-weight="400" textLength="54" lengthAdjust="spacingAndGlyphs">13/09/2025</text>
<text x="1409.20" y="501.00" font-size="10" fill="#6E7079" text-anchor="middle" font-weight="400" textLength="35" lengthAdjust="spacingAndGlyphs">09:00:0</text>
<line x1="1479.14" y1="476" x2="1479.14" y2="480" stroke="#6E7079" stroke-width="1"/>
<text x="1479.14" y="491.50" font-size="10" fill="#6E7079" text-anchor="middle" font-weight="400" textLength="54" lengthAdjust="spacingAndGlyphs">21/09/2025</text>
<text x="1479.14" y="501.00" font-size="10" fill="#6E7079" text-anchor="middle" font-weight="400" textLength="35" lengthAdjust="spacingAndGlyphs">16:00:0</text>
<line x1="1549.07" y1="476" x2="1549.07" y2="480" stroke="#6E7079" stroke-width="1"/>
<text x="1549.07" y="491.50" font-size="10" fill="#6E7079" text-anchor="middle" font-weight="400" textLength="54" lengthAdjust="spacingAndGlyphs">30/09/2025</text>
<text x="1549.07" y="501.00" font-size="10" fill="#6E7079" text-anchor="middle" font-weight="400" textLength="35" lengthAdjust="spacingAndGlyphs">04:00:0</text>
<line x1="1619.0" y1="476" x2="1619.0" y2="480" stroke="#6E7079" stroke-width="1"/>
<text x="1619.00" y="491.50" font-size="10" fill="#6E7079" text-anchor="middle" font-weight="400" textLength="54" lengthAdjust="spacingAndGlyphs">08/10/2025</text>
<text x="1619.00" y="501.00" font-size="10" fill="#6E7079" text-anchor="middle" font-weight="400" textLength="35" lengthAdjust="spacingAndGlyphs">11:00:0</text>
<line x1="1621.5" y1="476" x2="1621.5" y2="480" stroke="#6E7079" stroke-width="1"/>
<!-- stats -->
<g font-size="9.3" fill="#7a7a7a">
 <path d="M38.6,524.8 V530.6" stroke="#444" stroke-width="1.8"/><rect x="37.7" y="532" width="1.8" height="1.8" fill="#444"/>
 <text x="48.6" y="532.1">Warning Threshold: <tspan fill="#505050" font-weight="700">50</tspan></text>
 <line x1="146.5" y1="521.8" x2="146.5" y2="537" stroke="#e2e2e2"/>
 <text x="151.2" y="532.1">Critical Threshold: <tspan fill="#505050" font-weight="700">75</tspan></text>
 <line x1="243.5" y1="521.8" x2="243.5" y2="537" stroke="#e2e2e2"/>
 <path d="M35.3,546.5 L38.6,549.8 L35.3,553.1 M41.8,546.3 V553.3" stroke="#444" stroke-width="1.2" fill="none"/>
 <text x="48.6" y="552.9">Último: <tspan fill="#505050" font-weight="700">320</tspan></text>
 <line x1="100.5" y1="542.4" x2="100.5" y2="558" stroke="#e2e2e2"/>
 <path d="M111.5,545.5 V554 M107.5,550 L111.5,554 L115.5,550" stroke="#444" stroke-width="1.2" fill="none"/>
 <text x="121.8" y="552.9">Min: <tspan fill="#505050" font-weight="700">41</tspan></text>
 <line x1="156.5" y1="542.4" x2="156.5" y2="558" stroke="#e2e2e2"/>
 <path d="M171,546 H164.3 L168,549.9 L164.3,553.8 H171.3" stroke="#444" stroke-width="1.4" fill="none"/>
 <text x="177.5" y="552.9">Média: <tspan fill="#505050" font-weight="700">173.54</tspan></text>
 <line x1="241.5" y1="542.4" x2="241.5" y2="558" stroke="#e2e2e2"/>
 <path d="M252.3,554.5 V546 M248.2,550 L252.3,545.9 L256.4,550" stroke="#444" stroke-width="1.2" fill="none"/>
 <text x="262.5" y="552.9">Max: <tspan fill="#505050" font-weight="700">612</tspan></text>
</g>
<rect x="1679" y="0" width="1" height="1" fill="#8a94a6"/>
</svg>
</body></html>
